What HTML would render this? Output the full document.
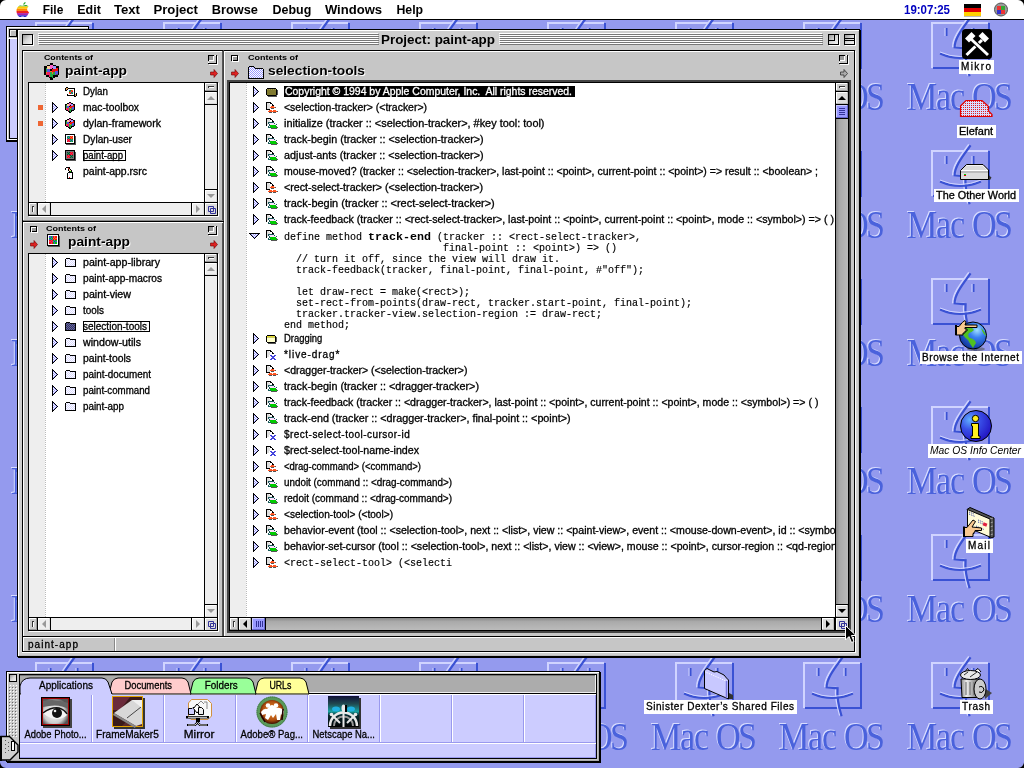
<!DOCTYPE html>
<html><head><meta charset="utf-8"><title>Mac OS</title>
<style>html,body{margin:0;padding:0;width:1024px;height:768px;overflow:hidden;background:#949aee;}
svg{position:absolute;left:0;top:0;display:block;will-change:transform}
text{white-space:pre}</style></head>
<body><svg width="1024" height="768" viewBox="0 0 1024 768">
<defs>
<pattern id="desk" x="0" y="0" width="128" height="128" patternUnits="userSpaceOnUse">
<rect width="128" height="128" fill="#949aee"/>
<g fill="none" stroke-linecap="butt">
<path d="M36 68 V23 H92" stroke="#d0d4ff" stroke-width="2"/>
<path d="M93 23 V68 H37" stroke="#3a52d4" stroke-width="2"/>
<path d="M74 17 C66 28 58 38 58 47 L69 48 C68 58 70 66 73 76" stroke="#d0d4ff" stroke-width="1.6" transform="translate(-1.2,-0.6)"/>
<path d="M74 17 C66 28 58 38 58 47 L69 48 C68 58 70 66 73 76" stroke="#3a52d4" stroke-width="2.2" transform="translate(0.6,0.3)"/>
<path d="M50.5 28 V36 M77.5 28 V36" stroke="#3a52d4" stroke-width="2"/>
<path d="M49 28 V36 M76 28 V36" stroke="#d0d4ff" stroke-width="1"/>
<path d="M44 53.5 Q64 62.5 85 53.5" stroke="#3a52d4" stroke-width="2"/>
<path d="M44 52 Q64 61 85 52" stroke="#d0d4ff" stroke-width="1"/>
</g>
<g font-family="Liberation Serif" font-size="34" lengthAdjust="spacingAndGlyphs">
<g transform="translate(10,109) scale(1,1.19)" fill="#d8dcff"><text x="0" y="0" textLength="58">Mac</text><text x="65" y="0" textLength="41">OS</text></g>
<g transform="translate(11,110) scale(1,1.19)" fill="#4a62dc"><text x="0" y="0" textLength="58">Mac</text><text x="65" y="0" textLength="41">OS</text></g>
</g>
</pattern>
</defs>
<rect x="0" y="0" width="1024" height="768" fill="url(#desk)"/>
<g transform="translate(962,29)"><rect x="0" y="0" width="30" height="30" rx="3.5" fill="#000"/><path d="M20 11 L4.5 26" stroke="#fff" stroke-width="3"/><path d="M27 9.5 L20.5 3 L16.5 7 L23 13.5 Z" fill="#fff"/><path d="M9 10 L26 26" stroke="#000" stroke-width="5"/><path d="M9 10 L26 26" stroke="#fff" stroke-width="3"/><path d="M3 9.5 L9.5 3 L13.5 7 L7 13.5 Z" fill="#fff"/></g>
<rect x="959" y="60" width="35" height="14" fill="#ffffff"/>
<text x="961" y="70" font-family="Liberation Sans" font-size="10" font-weight="normal" fill="#000" textLength="30" lengthAdjust="spacing" stroke="#000" stroke-width="0.3">Mikro</text>
<defs><pattern id="reddot" width="2" height="2" patternUnits="userSpaceOnUse"><rect width="2" height="2" fill="#d8dcff"/><rect x="1" y="1" width="1" height="1" fill="#e02020"/></pattern></defs>
<path d="M960.5 106 L966 100.5 H982 L988.5 106.5 V111 L992 114.5 V116.5 H960.5 Z" fill="url(#reddot)" stroke="#e00000" stroke-width="1.2"/>
<rect x="957" y="125" width="39" height="13" fill="#ffffff"/>
<text x="959" y="135" font-family="Liberation Sans" font-size="10" font-weight="normal" fill="#000" textLength="34" lengthAdjust="spacingAndGlyphs" stroke="#000" stroke-width="0.3">Elefant</text>
<g transform="translate(960,164)"><path d="M28.5 11 L31.5 13.5 L30 16 H28.5 Z" fill="#333"/><path d="M0.5 6.5 L6.5 0.5 H23 L28.5 6 V15.5 H0.5 Z" fill="#dcdcdc" stroke="#000" stroke-width="1"/><path d="M1 6.5 H28" stroke="#fff" stroke-width="1"/><path d="M1 8 H28" stroke="#999" stroke-width="1"/><path d="M6.5 1.5 H22.5 L27 6" stroke="#f4f4f4" fill="none"/><rect x="4" y="10" width="2" height="1" fill="#0c0"/><rect x="4" y="11" width="2" height="1" fill="#d00"/></g>
<rect x="934" y="189" width="85" height="13" fill="#ffffff"/>
<text x="936" y="199" font-family="Liberation Sans" font-size="10" font-weight="normal" fill="#000" textLength="80" lengthAdjust="spacingAndGlyphs" stroke="#000" stroke-width="0.3">The Other World</text>
<defs><radialGradient id="globe" cx="0.65" cy="0.3" r="0.8"><stop offset="0" stop-color="#a0e0ff"/><stop offset="0.35" stop-color="#3a80f0"/><stop offset="1" stop-color="#0a2a90"/></radialGradient><radialGradient id="infog" cx="0.3" cy="0.3" r="0.8"><stop offset="0" stop-color="#60b0ff"/><stop offset="0.4" stop-color="#3a50e8"/><stop offset="1" stop-color="#2010c0"/></radialGradient></defs>
<g transform="translate(955,320)"><ellipse cx="21" cy="29" rx="9" ry="2" fill="#555" opacity="0.6"/><circle cx="18" cy="15.5" r="13.5" fill="url(#globe)" stroke="#000" stroke-width="1"/><path d="M12 6 Q17 7 19 10 Q16 13 14 13 Q12 16 15 18 Q20 19 21 23 Q19 26 18 28 Q15 24 13 20 Q9 17 7 13 Q8 8 12 6 Z M26 8 Q30 11 31 16 Q28 14 26 8 Z" fill="#50c020"/><path d="M0.5 6.5 H4 Q8 1 10 0.5 L11 2 L10 5 H22 V7.5 H10 V9 H12 V11 H10 V13 H8 V15 H0.5 Z" fill="#f8c890" stroke="#000" stroke-width="1"/><rect x="0" y="5" width="2" height="10" fill="#000"/></g>
<rect x="920" y="351" width="102" height="13" fill="#ffffff"/>
<text x="922" y="361" font-family="Liberation Sans" font-size="10" font-weight="normal" fill="#000" textLength="97" lengthAdjust="spacing" stroke="#000" stroke-width="0.3">Browse the Internet</text>
<g transform="translate(960,411)"><circle cx="16" cy="15" r="15.5" fill="url(#infog)" stroke="#000" stroke-width="1"/><circle cx="15.5" cy="7.5" r="3.2" fill="#ffee20" stroke="#000" stroke-width="1"/><path d="M11.5 12.5 H18.5 V25 H20 V27.5 H11 V25 H12.5 V15 H11.5 Z" fill="#ffee20" stroke="#000" stroke-width="1"/></g>
<rect x="928" y="444" width="96" height="14" fill="#ffffff"/>
<text x="930" y="454" font-family="Liberation Sans" font-size="10" font-weight="normal" fill="#000" textLength="91" lengthAdjust="spacingAndGlyphs" font-style="italic">Mac OS Info Center</text>
<g transform="translate(963,507)"><path d="M4 2.5 L7 0.5 L31 11 V30 L27 31 Z" fill="#555" stroke="#000" stroke-width="1"/><path d="M27 12 L30 11 M27 16 L30 15 M27 20 L30 19 M27 24 L30 23 M27 28 L30 27" stroke="#aaa" stroke-width="0.8"/><path d="M4.5 2.5 L27 12 V30 L4.5 20.5 Z" fill="#fffbd8" stroke="#000" stroke-width="1"/><path d="M6 5 L11 7 M6 7 L12 9.5 M15 13 L20 15 M15 15 L20 17 M13 19 L21 22.5" stroke="#3040a0" stroke-width="1" stroke-dasharray="1 1"/><rect x="20" y="16" width="4" height="3" fill="#e02040" transform="rotate(22 22 17.5)"/><path d="M0.5 20.5 H4 L10 13 L12.5 14.5 L9 20 L18.5 21 V23.5 H12 V25 H11 V26.5 H10 V29.5 H0.5 Z" fill="#f8c890" stroke="#000" stroke-width="1"/><rect x="0" y="19.5" width="2" height="10.5" fill="#000"/></g>
<rect x="966" y="539" width="27" height="14" fill="#ffffff"/>
<text x="968" y="549" font-family="Liberation Sans" font-size="10" font-weight="normal" fill="#000" textLength="22" lengthAdjust="spacing" stroke="#000" stroke-width="0.3">Mail</text>
<g transform="translate(704,668)"><path d="M25 25 L29 27 L29 31 L24 31 Z" fill="#333"/><path d="M0.5 2.5 L3 0.5 L10 4 L13 3.5 L20 7 L22.5 10 L24.5 12 V31 L0.5 20.5 Z" fill="#c8c8ff" stroke="#000" stroke-width="1"/><path d="M1.5 4 L22 13" stroke="#fff" stroke-width="1" stroke-dasharray="1 1"/><path d="M22.5 13 V30" stroke="#7777dd" stroke-width="1.5"/></g>
<rect x="644" y="700" width="153" height="14" fill="#ffffff"/>
<text x="646" y="710" font-family="Liberation Sans" font-size="10" font-weight="normal" fill="#000" textLength="148" lengthAdjust="spacing" stroke="#000" stroke-width="0.3">Sinister Dexter’s Shared Files</text>
<defs><linearGradient id="can" x1="0" x2="1"><stop offset="0" stop-color="#888"/><stop offset="0.3" stop-color="#eee"/><stop offset="0.6" stop-color="#aaa"/><stop offset="1" stop-color="#666"/></linearGradient></defs>
<g transform="translate(960,668)"><path d="M24 20 L32 25 L25 31 Z" fill="#444"/><path d="M5 4 L7.5 0.5 L10 4 M12 5 L18 0.5 L21 4" fill="#fff" stroke="#000" stroke-width="1"/><path d="M1 11 L2 29.5 H18 L20 11 Z" fill="url(#can)" stroke="#000" stroke-width="1"/><ellipse cx="10.5" cy="7" rx="10" ry="4.5" fill="#e8e8e8" stroke="#000" stroke-width="1"/><path d="M4 7 L8 4 M10 9 L17 4" stroke="#000" stroke-width="0.8"/><path d="M6 14 V27 M10 14 V27 M14 14 V27" stroke="#666" stroke-width="1"/><ellipse cx="20" cy="21" rx="6" ry="10" fill="#ccc" stroke="#000" stroke-width="1"/><path d="M19 19 Q23 17 24 22 Q22 26 19 24" fill="none" stroke="#000" stroke-width="1"/></g>
<rect x="960" y="700" width="33" height="14" fill="#ffffff"/>
<text x="962" y="710" font-family="Liberation Sans" font-size="10" font-weight="normal" fill="#000" textLength="28" lengthAdjust="spacing" stroke="#000" stroke-width="0.3">Trash</text>
<rect x="6" y="26" width="83" height="116" fill="#000"/>
<rect x="7" y="27" width="81" height="114" fill="#c6c6c6"/>
<rect x="7" y="27" width="81" height="1" fill="#fff"/>
<rect x="7" y="27" width="1" height="113" fill="#fff"/>
<rect x="9" y="29" width="8" height="1" fill="#000"/>
<rect x="9" y="36" width="8" height="1" fill="#000"/>
<rect x="9" y="29" width="1" height="8" fill="#000"/>
<rect x="16" y="29" width="1" height="8" fill="#000"/>
<rect x="10" y="30" width="6" height="6" fill="#bbb"/>
<rect x="10" y="30" width="6" height="1" fill="#eee"/>
<rect x="10" y="30" width="1" height="6" fill="#eee"/>
<rect x="8" y="38" width="9" height="1" fill="#fff"/>
<rect x="9" y="39" width="1" height="100" fill="#000"/>
<rect x="10" y="39" width="7" height="99" fill="#ccccff"/>
<rect x="9" y="138" width="8" height="1" fill="#000"/>
<rect x="8" y="139" width="9" height="1" fill="#fff"/>
<rect x="7" y="140" width="11" height="1" fill="#000"/>
<rect x="8" y="141" width="11" height="1" fill="#000"/>
<rect x="17" y="29" width="843" height="628" fill="#000"/>
<rect x="860" y="30" width="1" height="628" fill="#000"/>
<rect x="18" y="657" width="843" height="1" fill="#000"/>
<rect x="18" y="30" width="841" height="626" fill="#cecece"/>
<rect x="23" y="51" width="831" height="600" fill="#c6c6c6"/>
<rect x="18" y="30" width="841" height="1" fill="#fff"/>
<rect x="18" y="30" width="1" height="626" fill="#fff"/>
<rect x="858" y="31" width="1" height="625" fill="#bbbbbb"/>
<rect x="19" y="655" width="840" height="1" fill="#bbbbbb"/>
<defs><linearGradient id="gbox" x1="0" y1="0" x2="1" y2="1"><stop offset="0" stop-color="#999"/><stop offset="0.5" stop-color="#d8d8d8"/><stop offset="1" stop-color="#f4f4f4"/></linearGradient></defs>
<rect x="22" y="34" width="11" height="1" fill="#000"/>
<rect x="22" y="44" width="11" height="1" fill="#000"/>
<rect x="22" y="34" width="1" height="11" fill="#000"/>
<rect x="32" y="34" width="1" height="11" fill="#000"/>
<rect x="23" y="35" width="9" height="9" fill="url(#gbox)"/>
<rect x="23" y="45" width="11" height="1" fill="#fff"/>
<rect x="33" y="35" width="1" height="11" fill="#fff"/>
<rect x="38" y="33" width="340" height="1" fill="#fff"/>
<rect x="39" y="34" width="340" height="1" fill="#777"/>
<rect x="38" y="35" width="340" height="1" fill="#fff"/>
<rect x="39" y="36" width="340" height="1" fill="#777"/>
<rect x="38" y="37" width="340" height="1" fill="#fff"/>
<rect x="39" y="38" width="340" height="1" fill="#777"/>
<rect x="38" y="39" width="340" height="1" fill="#fff"/>
<rect x="39" y="40" width="340" height="1" fill="#777"/>
<rect x="38" y="41" width="340" height="1" fill="#fff"/>
<rect x="39" y="42" width="340" height="1" fill="#777"/>
<rect x="38" y="43" width="340" height="1" fill="#fff"/>
<rect x="39" y="44" width="340" height="1" fill="#777"/>
<rect x="499" y="33" width="323" height="1" fill="#fff"/>
<rect x="500" y="34" width="323" height="1" fill="#777"/>
<rect x="499" y="35" width="323" height="1" fill="#fff"/>
<rect x="500" y="36" width="323" height="1" fill="#777"/>
<rect x="499" y="37" width="323" height="1" fill="#fff"/>
<rect x="500" y="38" width="323" height="1" fill="#777"/>
<rect x="499" y="39" width="323" height="1" fill="#fff"/>
<rect x="500" y="40" width="323" height="1" fill="#777"/>
<rect x="499" y="41" width="323" height="1" fill="#fff"/>
<rect x="500" y="42" width="323" height="1" fill="#777"/>
<rect x="499" y="43" width="323" height="1" fill="#fff"/>
<rect x="500" y="44" width="323" height="1" fill="#777"/>
<text x="381" y="44" font-family="Liberation Sans" font-size="12" font-weight="bold" fill="#000" textLength="114" lengthAdjust="spacingAndGlyphs">Project: paint-app</text>
<rect x="828" y="34" width="11" height="1" fill="#000"/>
<rect x="828" y="44" width="11" height="1" fill="#000"/>
<rect x="828" y="34" width="1" height="11" fill="#000"/>
<rect x="838" y="34" width="1" height="11" fill="#000"/>
<rect x="829" y="35" width="9" height="9" fill="url(#gbox)"/>
<rect x="829" y="45" width="11" height="1" fill="#fff"/>
<rect x="839" y="35" width="1" height="11" fill="#fff"/>
<rect x="828" y="34" width="7" height="1" fill="#000"/>
<rect x="828" y="40" width="7" height="1" fill="#000"/>
<rect x="828" y="34" width="1" height="7" fill="#000"/>
<rect x="834" y="34" width="1" height="7" fill="#000"/>
<rect x="844" y="34" width="11" height="1" fill="#000"/>
<rect x="844" y="44" width="11" height="1" fill="#000"/>
<rect x="844" y="34" width="1" height="11" fill="#000"/>
<rect x="854" y="34" width="1" height="11" fill="#000"/>
<rect x="845" y="35" width="9" height="9" fill="url(#gbox)"/>
<rect x="845" y="45" width="11" height="1" fill="#fff"/>
<rect x="855" y="35" width="1" height="11" fill="#fff"/>
<rect x="845" y="38" width="9" height="1" fill="#000"/>
<rect x="845" y="40" width="9" height="1" fill="#000"/>
<rect x="22" y="50" width="833" height="1" fill="#000"/>
<rect x="22" y="50" width="1" height="602" fill="#000"/>
<rect x="23" y="51" width="831" height="1" fill="#fff"/>
<rect x="23" y="51" width="1" height="585" fill="#fff"/>
<rect x="854" y="50" width="1" height="602" fill="#000"/>
<rect x="855" y="51" width="1" height="602" fill="#fff"/>
<rect x="222" y="51" width="1" height="585" fill="#555"/>
<rect x="223" y="50" width="1" height="586" fill="#444"/>
<rect x="224" y="51" width="1" height="585" fill="#fff"/>
<rect x="23" y="220" width="200" height="1" fill="#888"/>
<rect x="22" y="221" width="202" height="1" fill="#000"/>
<rect x="23" y="222" width="200" height="1" fill="#fff"/>
<rect x="22" y="636" width="833" height="1" fill="#000"/>
<rect x="23" y="637" width="831" height="1" fill="#fff"/>
<rect x="22" y="651" width="833" height="1" fill="#000"/>
<rect x="22" y="652" width="834" height="1" fill="#fff"/>
<rect x="23" y="637" width="1" height="14" fill="#fff"/>
<rect x="114" y="638" width="1" height="13" fill="#888"/>
<rect x="115" y="638" width="1" height="13" fill="#fff"/>
<text x="28" y="648" font-family="Liberation Sans" font-size="10" font-weight="normal" fill="#000" textLength="50" lengthAdjust="spacing" stroke="#000" stroke-width="0.3">paint-app</text>
<rect x="28" y="82" width="190" height="1" fill="#000"/>
<rect x="28" y="215" width="190" height="1" fill="#000"/>
<rect x="28" y="82" width="1" height="134" fill="#000"/>
<rect x="217" y="82" width="1" height="134" fill="#000"/>
<rect x="29" y="83" width="175" height="119" fill="#fff"/>
<rect x="29" y="83" width="16" height="119" fill="#eeeeee"/>
<line x1="45.5" y1="83" x2="45.5" y2="202" stroke="#bbb" stroke-width="1" stroke-dasharray="1 1"/>
<rect x="204" y="82" width="1" height="134" fill="#000"/>
<rect x="28" y="202" width="190" height="1" fill="#000"/>
<rect x="205" y="83" width="12" height="8" fill="#cccccc"/>
<rect x="205" y="83" width="12" height="1" fill="#fff"/>
<rect x="205" y="83" width="1" height="8" fill="#fff"/>
<rect x="205" y="90" width="12" height="1" fill="#999"/>
<rect x="216" y="83" width="1" height="8" fill="#999"/>
<rect x="208" y="86" width="6" height="1" fill="#333"/>
<rect x="208" y="86" width="1" height="2" fill="#333"/>
<rect x="209" y="87" width="5" height="1" fill="#fff"/>
<rect x="205" y="91" width="12" height="1" fill="#000"/>
<rect x="205" y="92" width="12" height="12" fill="#eeeeee"/>
<rect x="205" y="92" width="12" height="1" fill="#fff"/>
<rect x="205" y="92" width="1" height="12" fill="#fff"/>
<rect x="205" y="103" width="12" height="1" fill="#ddd"/>
<rect x="216" y="92" width="1" height="12" fill="#ddd"/>
<path d="M207.0 100.0 L215.0 100.0 L211.0 96.0 Z" fill="#999"/>
<rect x="205" y="104" width="12" height="1" fill="#000"/>
<rect x="205" y="105" width="12" height="84" fill="#eeeeee"/>
<rect x="205" y="189" width="12" height="1" fill="#000"/>
<rect x="205" y="190" width="12" height="12" fill="#eeeeee"/>
<rect x="205" y="190" width="12" height="1" fill="#fff"/>
<rect x="205" y="190" width="1" height="12" fill="#fff"/>
<rect x="205" y="201" width="12" height="1" fill="#ddd"/>
<rect x="216" y="190" width="1" height="12" fill="#ddd"/>
<path d="M207.0 194.0 L215.0 194.0 L211.0 198.0 Z" fill="#999"/>
<rect x="29" y="203" width="8" height="12" fill="#cccccc"/>
<rect x="29" y="203" width="8" height="1" fill="#fff"/>
<rect x="29" y="203" width="1" height="12" fill="#fff"/>
<rect x="29" y="214" width="8" height="1" fill="#999"/>
<rect x="36" y="203" width="1" height="12" fill="#999"/>
<rect x="32" y="206" width="1" height="6" fill="#333"/>
<rect x="32" y="206" width="2" height="1" fill="#333"/>
<rect x="33" y="207" width="1" height="5" fill="#fff"/>
<rect x="37" y="202" width="1" height="14" fill="#000"/>
<rect x="38" y="203" width="12" height="12" fill="#eeeeee"/>
<rect x="38" y="203" width="12" height="1" fill="#fff"/>
<rect x="38" y="203" width="1" height="12" fill="#fff"/>
<rect x="38" y="214" width="12" height="1" fill="#ddd"/>
<rect x="49" y="203" width="1" height="12" fill="#ddd"/>
<path d="M46.0 205.0 L46.0 213.0 L42.0 209.0 Z" fill="#999"/>
<rect x="50" y="202" width="1" height="14" fill="#000"/>
<rect x="51" y="203" width="140" height="12" fill="#eeeeee"/>
<rect x="191" y="202" width="1" height="14" fill="#000"/>
<rect x="192" y="203" width="12" height="12" fill="#eeeeee"/>
<rect x="192" y="203" width="12" height="1" fill="#fff"/>
<rect x="192" y="203" width="1" height="12" fill="#fff"/>
<rect x="192" y="214" width="12" height="1" fill="#ddd"/>
<rect x="203" y="203" width="1" height="12" fill="#ddd"/>
<path d="M196.0 205.0 L196.0 213.0 L200.0 209.0 Z" fill="#999"/>
<rect x="205" y="203" width="12" height="12" fill="#dddddd"/>
<rect x="205" y="203" width="12" height="1" fill="#fff"/>
<rect x="205" y="203" width="1" height="12" fill="#fff"/>
<path d="M208.5 206.5 h5 v5 h-5 z M210.5 208.5 h5 v5 h-5 z" fill="none" stroke="#333399" stroke-width="1"/>
<rect x="29" y="216" width="190" height="1" fill="#fff"/>
<rect x="218" y="83" width="1" height="134" fill="#fff"/>
<rect x="28" y="253" width="190" height="1" fill="#000"/>
<rect x="28" y="630" width="190" height="1" fill="#000"/>
<rect x="28" y="253" width="1" height="378" fill="#000"/>
<rect x="217" y="253" width="1" height="378" fill="#000"/>
<rect x="29" y="254" width="175" height="363" fill="#fff"/>
<rect x="29" y="254" width="16" height="363" fill="#eeeeee"/>
<line x1="45.5" y1="254" x2="45.5" y2="617" stroke="#bbb" stroke-width="1" stroke-dasharray="1 1"/>
<rect x="204" y="253" width="1" height="378" fill="#000"/>
<rect x="28" y="617" width="190" height="1" fill="#000"/>
<rect x="205" y="254" width="12" height="8" fill="#cccccc"/>
<rect x="205" y="254" width="12" height="1" fill="#fff"/>
<rect x="205" y="254" width="1" height="8" fill="#fff"/>
<rect x="205" y="261" width="12" height="1" fill="#999"/>
<rect x="216" y="254" width="1" height="8" fill="#999"/>
<rect x="208" y="257" width="6" height="1" fill="#333"/>
<rect x="208" y="257" width="1" height="2" fill="#333"/>
<rect x="209" y="258" width="5" height="1" fill="#fff"/>
<rect x="205" y="262" width="12" height="1" fill="#000"/>
<rect x="205" y="263" width="12" height="12" fill="#eeeeee"/>
<rect x="205" y="263" width="12" height="1" fill="#fff"/>
<rect x="205" y="263" width="1" height="12" fill="#fff"/>
<rect x="205" y="274" width="12" height="1" fill="#ddd"/>
<rect x="216" y="263" width="1" height="12" fill="#ddd"/>
<path d="M207.0 271.0 L215.0 271.0 L211.0 267.0 Z" fill="#999"/>
<rect x="205" y="275" width="12" height="1" fill="#000"/>
<rect x="205" y="276" width="12" height="328" fill="#eeeeee"/>
<rect x="205" y="604" width="12" height="1" fill="#000"/>
<rect x="205" y="605" width="12" height="12" fill="#eeeeee"/>
<rect x="205" y="605" width="12" height="1" fill="#fff"/>
<rect x="205" y="605" width="1" height="12" fill="#fff"/>
<rect x="205" y="616" width="12" height="1" fill="#ddd"/>
<rect x="216" y="605" width="1" height="12" fill="#ddd"/>
<path d="M207.0 609.0 L215.0 609.0 L211.0 613.0 Z" fill="#999"/>
<rect x="29" y="618" width="8" height="12" fill="#cccccc"/>
<rect x="29" y="618" width="8" height="1" fill="#fff"/>
<rect x="29" y="618" width="1" height="12" fill="#fff"/>
<rect x="29" y="629" width="8" height="1" fill="#999"/>
<rect x="36" y="618" width="1" height="12" fill="#999"/>
<rect x="32" y="621" width="1" height="6" fill="#333"/>
<rect x="32" y="621" width="2" height="1" fill="#333"/>
<rect x="33" y="622" width="1" height="5" fill="#fff"/>
<rect x="37" y="617" width="1" height="14" fill="#000"/>
<rect x="38" y="618" width="12" height="12" fill="#eeeeee"/>
<rect x="38" y="618" width="12" height="1" fill="#fff"/>
<rect x="38" y="618" width="1" height="12" fill="#fff"/>
<rect x="38" y="629" width="12" height="1" fill="#ddd"/>
<rect x="49" y="618" width="1" height="12" fill="#ddd"/>
<path d="M46.0 620.0 L46.0 628.0 L42.0 624.0 Z" fill="#999"/>
<rect x="50" y="617" width="1" height="14" fill="#000"/>
<rect x="51" y="618" width="140" height="12" fill="#eeeeee"/>
<rect x="191" y="617" width="1" height="14" fill="#000"/>
<rect x="192" y="618" width="12" height="12" fill="#eeeeee"/>
<rect x="192" y="618" width="12" height="1" fill="#fff"/>
<rect x="192" y="618" width="1" height="12" fill="#fff"/>
<rect x="192" y="629" width="12" height="1" fill="#ddd"/>
<rect x="203" y="618" width="1" height="12" fill="#ddd"/>
<path d="M196.0 620.0 L196.0 628.0 L200.0 624.0 Z" fill="#999"/>
<rect x="205" y="618" width="12" height="12" fill="#dddddd"/>
<rect x="205" y="618" width="12" height="1" fill="#fff"/>
<rect x="205" y="618" width="1" height="12" fill="#fff"/>
<path d="M208.5 621.5 h5 v5 h-5 z M210.5 623.5 h5 v5 h-5 z" fill="none" stroke="#333399" stroke-width="1"/>
<rect x="29" y="631" width="190" height="1" fill="#fff"/>
<rect x="218" y="254" width="1" height="378" fill="#fff"/>
<rect x="227" y="80" width="624" height="1" fill="#444444"/>
<rect x="227" y="632" width="624" height="1" fill="#444444"/>
<rect x="227" y="80" width="1" height="553" fill="#444444"/>
<rect x="850" y="80" width="1" height="553" fill="#444444"/>
<rect x="228" y="81" width="622" height="1" fill="#444444"/>
<rect x="228" y="631" width="622" height="1" fill="#444444"/>
<rect x="228" y="81" width="1" height="551" fill="#444444"/>
<rect x="849" y="81" width="1" height="551" fill="#444444"/>
<rect x="229" y="82" width="620" height="1" fill="#000"/>
<rect x="229" y="630" width="620" height="1" fill="#000"/>
<rect x="229" y="82" width="1" height="549" fill="#000"/>
<rect x="848" y="82" width="1" height="549" fill="#000"/>
<rect x="230" y="83" width="605" height="534" fill="#fff"/>
<rect x="230" y="83" width="16" height="534" fill="#eeeeee"/>
<line x1="246.5" y1="83" x2="246.5" y2="617" stroke="#bbb" stroke-width="1" stroke-dasharray="1 1"/>
<rect x="835" y="82" width="1" height="549" fill="#000"/>
<rect x="229" y="617" width="620" height="1" fill="#000"/>
<rect x="836" y="83" width="12" height="8" fill="#cccccc"/>
<rect x="836" y="83" width="12" height="1" fill="#fff"/>
<rect x="836" y="83" width="1" height="8" fill="#fff"/>
<rect x="836" y="90" width="12" height="1" fill="#999"/>
<rect x="847" y="83" width="1" height="8" fill="#999"/>
<rect x="839" y="86" width="6" height="1" fill="#333"/>
<rect x="839" y="86" width="1" height="2" fill="#333"/>
<rect x="840" y="87" width="5" height="1" fill="#fff"/>
<rect x="836" y="91" width="12" height="1" fill="#000"/>
<rect x="836" y="92" width="12" height="12" fill="#dddddd"/>
<rect x="836" y="92" width="12" height="1" fill="#fff"/>
<rect x="836" y="92" width="1" height="12" fill="#fff"/>
<rect x="836" y="103" width="12" height="1" fill="#bbb"/>
<rect x="847" y="92" width="1" height="12" fill="#bbb"/>
<path d="M838.0 100.0 L846.0 100.0 L842.0 96.0 Z" fill="#000"/>
<rect x="836" y="104" width="12" height="1" fill="#000"/>
<rect x="836" y="105" width="12" height="13" fill="#9999ff"/>
<rect x="836" y="105" width="12" height="1" fill="#ccccff"/>
<rect x="836" y="105" width="1" height="13" fill="#ccccff"/>
<rect x="836" y="117" width="12" height="1" fill="#6666cc"/>
<rect x="847" y="105" width="1" height="13" fill="#6666cc"/>
<rect x="839" y="108" width="6" height="1" fill="#333399"/>
<rect x="839" y="110" width="6" height="1" fill="#333399"/>
<rect x="839" y="112" width="6" height="1" fill="#333399"/>
<rect x="839" y="114" width="6" height="1" fill="#333399"/>
<rect x="836" y="118" width="12" height="1" fill="#000"/>
<defs><linearGradient id="trv" x1="0" x2="1"><stop offset="0" stop-color="#888"/><stop offset="0.3" stop-color="#aaa"/><stop offset="1" stop-color="#bbb"/></linearGradient><linearGradient id="trh" x1="0" x2="0" y1="0" y2="1"><stop offset="0" stop-color="#888"/><stop offset="0.3" stop-color="#aaa"/><stop offset="1" stop-color="#bbb"/></linearGradient></defs>
<rect x="836" y="119" width="12" height="485" fill="url(#trv)"/>
<rect x="836" y="604" width="12" height="1" fill="#000"/>
<rect x="836" y="605" width="12" height="12" fill="#dddddd"/>
<rect x="836" y="605" width="12" height="1" fill="#fff"/>
<rect x="836" y="605" width="1" height="12" fill="#fff"/>
<rect x="836" y="616" width="12" height="1" fill="#bbb"/>
<rect x="847" y="605" width="1" height="12" fill="#bbb"/>
<path d="M838.0 609.0 L846.0 609.0 L842.0 613.0 Z" fill="#000"/>
<rect x="230" y="618" width="8" height="12" fill="#cccccc"/>
<rect x="230" y="618" width="8" height="1" fill="#fff"/>
<rect x="230" y="618" width="1" height="12" fill="#fff"/>
<rect x="230" y="629" width="8" height="1" fill="#999"/>
<rect x="237" y="618" width="1" height="12" fill="#999"/>
<rect x="233" y="621" width="1" height="6" fill="#333"/>
<rect x="233" y="621" width="2" height="1" fill="#333"/>
<rect x="234" y="622" width="1" height="5" fill="#fff"/>
<rect x="238" y="617" width="1" height="14" fill="#000"/>
<rect x="239" y="618" width="12" height="12" fill="#dddddd"/>
<rect x="239" y="618" width="12" height="1" fill="#fff"/>
<rect x="239" y="618" width="1" height="12" fill="#fff"/>
<rect x="239" y="629" width="12" height="1" fill="#bbb"/>
<rect x="250" y="618" width="1" height="12" fill="#bbb"/>
<path d="M247.0 620.0 L247.0 628.0 L243.0 624.0 Z" fill="#000"/>
<rect x="251" y="617" width="1" height="14" fill="#000"/>
<rect x="252" y="618" width="13" height="12" fill="#9999ff"/>
<rect x="252" y="618" width="13" height="1" fill="#ccccff"/>
<rect x="252" y="618" width="1" height="12" fill="#ccccff"/>
<rect x="252" y="629" width="13" height="1" fill="#6666cc"/>
<rect x="264" y="618" width="1" height="12" fill="#6666cc"/>
<rect x="256" y="621" width="1" height="6" fill="#333399"/>
<rect x="258" y="621" width="1" height="6" fill="#333399"/>
<rect x="260" y="621" width="1" height="6" fill="#333399"/>
<rect x="262" y="621" width="1" height="6" fill="#333399"/>
<rect x="265" y="617" width="1" height="14" fill="#000"/>
<rect x="266" y="618" width="555" height="12" fill="url(#trh)"/>
<rect x="821" y="617" width="1" height="14" fill="#000"/>
<rect x="822" y="618" width="12" height="12" fill="#dddddd"/>
<rect x="822" y="618" width="12" height="1" fill="#fff"/>
<rect x="822" y="618" width="1" height="12" fill="#fff"/>
<rect x="822" y="629" width="12" height="1" fill="#bbb"/>
<rect x="833" y="618" width="1" height="12" fill="#bbb"/>
<path d="M826.0 620.0 L826.0 628.0 L830.0 624.0 Z" fill="#000"/>
<rect x="834" y="617" width="1" height="14" fill="#000"/>
<rect x="836" y="618" width="12" height="12" fill="#dddddd"/>
<rect x="836" y="618" width="12" height="1" fill="#fff"/>
<rect x="836" y="618" width="1" height="12" fill="#fff"/>
<path d="M839.5 621.5 h5 v5 h-5 z M841.5 623.5 h5 v5 h-5 z" fill="none" stroke="#333399" stroke-width="1"/>
<defs><g id="tri" shape-rendering="crispEdges"><rect x="0" y="0" width="1" height="1" fill="#000"/><rect x="0" y="1" width="2" height="1" fill="#000"/><rect x="0" y="2" width="1" height="1" fill="#000"/><rect x="1" y="2" width="1" height="1" fill="#9999ff"/><rect x="2" y="2" width="1" height="1" fill="#000"/><rect x="0" y="3" width="1" height="1" fill="#000"/><rect x="1" y="3" width="1" height="1" fill="#ffffff"/><rect x="2" y="3" width="1" height="1" fill="#9999ff"/><rect x="3" y="3" width="1" height="1" fill="#000"/><rect x="0" y="4" width="1" height="1" fill="#000"/><rect x="1" y="4" width="1" height="1" fill="#9999ff"/><rect x="2" y="4" width="1" height="1" fill="#ffffff"/><rect x="3" y="4" width="1" height="1" fill="#9999ff"/><rect x="4" y="4" width="1" height="1" fill="#000"/><rect x="0" y="5" width="1" height="1" fill="#000"/><rect x="1" y="5" width="1" height="1" fill="#ffffff"/><rect x="2" y="5" width="1" height="1" fill="#9999ff"/><rect x="3" y="5" width="1" height="1" fill="#ffffff"/><rect x="4" y="5" width="1" height="1" fill="#9999ff"/><rect x="5" y="5" width="1" height="1" fill="#000"/><rect x="0" y="6" width="1" height="1" fill="#000"/><rect x="1" y="6" width="1" height="1" fill="#9999ff"/><rect x="2" y="6" width="1" height="1" fill="#ffffff"/><rect x="3" y="6" width="1" height="1" fill="#9999ff"/><rect x="4" y="6" width="1" height="1" fill="#000"/><rect x="0" y="7" width="1" height="1" fill="#000"/><rect x="1" y="7" width="1" height="1" fill="#ffffff"/><rect x="2" y="7" width="1" height="1" fill="#9999ff"/><rect x="3" y="7" width="1" height="1" fill="#000"/><rect x="0" y="8" width="1" height="1" fill="#000"/><rect x="1" y="8" width="1" height="1" fill="#9999ff"/><rect x="2" y="8" width="1" height="1" fill="#000"/><rect x="0" y="9" width="2" height="1" fill="#000"/><rect x="0" y="10" width="1" height="1" fill="#000"/></g><g id="tridn" shape-rendering="crispEdges"><rect x="0" y="0" width="11" height="1" fill="#000"/><rect x="1" y="1" width="1" height="1" fill="#000"/><rect x="2" y="1" width="1" height="1" fill="#9999ff"/><rect x="3" y="1" width="1" height="1" fill="#ffffff"/><rect x="4" y="1" width="1" height="1" fill="#9999ff"/><rect x="5" y="1" width="1" height="1" fill="#ffffff"/><rect x="6" y="1" width="1" height="1" fill="#9999ff"/><rect x="7" y="1" width="1" height="1" fill="#ffffff"/><rect x="8" y="1" width="1" height="1" fill="#9999ff"/><rect x="9" y="1" width="1" height="1" fill="#000"/><rect x="2" y="2" width="1" height="1" fill="#000"/><rect x="3" y="2" width="1" height="1" fill="#9999ff"/><rect x="4" y="2" width="1" height="1" fill="#ffffff"/><rect x="5" y="2" width="1" height="1" fill="#9999ff"/><rect x="6" y="2" width="1" height="1" fill="#ffffff"/><rect x="7" y="2" width="1" height="1" fill="#9999ff"/><rect x="8" y="2" width="1" height="1" fill="#000"/><rect x="3" y="3" width="1" height="1" fill="#000"/><rect x="4" y="3" width="1" height="1" fill="#9999ff"/><rect x="5" y="3" width="1" height="1" fill="#ffffff"/><rect x="6" y="3" width="1" height="1" fill="#9999ff"/><rect x="7" y="3" width="1" height="1" fill="#000"/><rect x="4" y="4" width="1" height="1" fill="#000"/><rect x="5" y="4" width="1" height="1" fill="#9999ff"/><rect x="6" y="4" width="1" height="1" fill="#000"/><rect x="5" y="5" width="1" height="1" fill="#000"/></g><g id="cls" shape-rendering="crispEdges"><rect x="0" y="0" width="5" height="1" fill="#000"/><rect x="0" y="1" width="1" height="1" fill="#000"/><rect x="1" y="1" width="2" height="1" fill="#dddddd"/><rect x="4" y="1" width="2" height="1" fill="#000"/><rect x="0" y="2" width="1" height="1" fill="#000"/><rect x="1" y="2" width="3" height="1" fill="#dddddd"/><rect x="6" y="2" width="1" height="1" fill="#000"/><rect x="0" y="3" width="1" height="1" fill="#000"/><rect x="1" y="3" width="3" height="1" fill="#dddddd"/><rect x="6" y="3" width="2" height="1" fill="#000"/><rect x="0" y="4" width="1" height="1" fill="#000"/><rect x="1" y="4" width="3" height="1" fill="#dddddd"/><rect x="5" y="4" width="3" height="1" fill="#ff5522"/><rect x="0" y="5" width="1" height="1" fill="#000"/><rect x="1" y="5" width="3" height="1" fill="#dddddd"/><rect x="4" y="5" width="5" height="1" fill="#ff5522"/><rect x="9" y="5" width="1" height="1" fill="#555555"/><rect x="0" y="6" width="1" height="1" fill="#000"/><rect x="1" y="6" width="3" height="1" fill="#dddddd"/><rect x="5" y="6" width="3" height="1" fill="#555555"/><rect x="0" y="7" width="4" height="1" fill="#000"/><rect x="3" y="8" width="3" height="1" fill="#ff5522"/><rect x="7" y="8" width="3" height="1" fill="#ff5522"/><rect x="2" y="9" width="9" height="1" fill="#ff5522"/><rect x="11" y="9" width="1" height="1" fill="#555555"/><rect x="3" y="10" width="3" height="1" fill="#555555"/><rect x="7" y="10" width="3" height="1" fill="#555555"/></g><g id="mth" shape-rendering="crispEdges"><rect x="0" y="0" width="5" height="1" fill="#000"/><rect x="0" y="1" width="1" height="1" fill="#000"/><rect x="1" y="1" width="2" height="1" fill="#dddddd"/><rect x="4" y="1" width="2" height="1" fill="#000"/><rect x="0" y="2" width="1" height="1" fill="#000"/><rect x="1" y="2" width="3" height="1" fill="#dddddd"/><rect x="6" y="2" width="1" height="1" fill="#000"/><rect x="0" y="3" width="1" height="1" fill="#000"/><rect x="1" y="3" width="3" height="1" fill="#dddddd"/><rect x="6" y="3" width="2" height="1" fill="#000"/><rect x="0" y="4" width="1" height="1" fill="#000"/><rect x="1" y="4" width="1" height="1" fill="#dddddd"/><rect x="2" y="4" width="6" height="1" fill="#1a5a5a"/><rect x="0" y="5" width="1" height="1" fill="#000"/><rect x="1" y="5" width="1" height="1" fill="#dddddd"/><rect x="2" y="5" width="1" height="1" fill="#1a5a5a"/><rect x="3" y="5" width="5" height="1" fill="#ffe0ff"/><rect x="8" y="5" width="1" height="1" fill="#1a5a5a"/><rect x="0" y="6" width="1" height="1" fill="#000"/><rect x="1" y="6" width="1" height="1" fill="#dddddd"/><rect x="3" y="6" width="1" height="1" fill="#1a5a5a"/><rect x="4" y="6" width="6" height="1" fill="#ffe0ff"/><rect x="10" y="6" width="1" height="1" fill="#1a5a5a"/><rect x="0" y="7" width="1" height="1" fill="#000"/><rect x="3" y="7" width="1" height="1" fill="#1a5a5a"/><rect x="4" y="7" width="6" height="1" fill="#00cc00"/><rect x="2" y="8" width="1" height="1" fill="#1a5a5a"/><rect x="4" y="8" width="6" height="1" fill="#00cc00"/><rect x="10" y="8" width="1" height="1" fill="#555555"/><rect x="2" y="9" width="3" height="1" fill="#1a5a5a"/><rect x="5" y="9" width="6" height="1" fill="#00cc00"/><rect x="11" y="9" width="1" height="1" fill="#555555"/><rect x="5" y="10" width="6" height="1" fill="#555555"/></g><g id="var" shape-rendering="crispEdges"><rect x="0" y="1" width="5" height="1" fill="#000"/><rect x="0" y="2" width="1" height="1" fill="#000"/><rect x="1" y="2" width="2" height="1" fill="#dddddd"/><rect x="4" y="2" width="2" height="1" fill="#000"/><rect x="0" y="3" width="1" height="1" fill="#000"/><rect x="1" y="3" width="3" height="1" fill="#dddddd"/><rect x="6" y="3" width="1" height="1" fill="#000"/><rect x="0" y="4" width="1" height="1" fill="#000"/><rect x="1" y="4" width="3" height="1" fill="#dddddd"/><rect x="6" y="4" width="2" height="1" fill="#000"/><rect x="0" y="5" width="1" height="1" fill="#000"/><rect x="1" y="5" width="3" height="1" fill="#dddddd"/><rect x="0" y="6" width="1" height="1" fill="#000"/><rect x="1" y="6" width="2" height="1" fill="#dddddd"/><rect x="4" y="6" width="2" height="1" fill="#4444dd"/><rect x="8" y="6" width="2" height="1" fill="#4444dd"/><rect x="0" y="7" width="1" height="1" fill="#000"/><rect x="1" y="7" width="2" height="1" fill="#dddddd"/><rect x="5" y="7" width="4" height="1" fill="#4444dd"/><rect x="0" y="8" width="1" height="1" fill="#000"/><rect x="6" y="8" width="2" height="1" fill="#4444dd"/><rect x="5" y="9" width="4" height="1" fill="#4444dd"/><rect x="4" y="10" width="2" height="1" fill="#4444dd"/><rect x="8" y="10" width="2" height="1" fill="#4444dd"/></g><g id="sect" shape-rendering="crispEdges"><rect x="1" y="2" width="8" height="1" fill="#000"/><rect x="0" y="3" width="1" height="1" fill="#000"/><rect x="1" y="3" width="1" height="1" fill="#ffee00"/><rect x="2" y="3" width="1" height="1" fill="#cccc66"/><rect x="3" y="3" width="1" height="1" fill="#ffee00"/><rect x="4" y="3" width="1" height="1" fill="#cccc66"/><rect x="5" y="3" width="1" height="1" fill="#ffee00"/><rect x="6" y="3" width="1" height="1" fill="#cccc66"/><rect x="7" y="3" width="1" height="1" fill="#ffee00"/><rect x="8" y="3" width="1" height="1" fill="#cccc66"/><rect x="9" y="3" width="1" height="1" fill="#000"/><rect x="0" y="4" width="1" height="1" fill="#000"/><rect x="1" y="4" width="8" height="1" fill="#cccc66"/><rect x="9" y="4" width="1" height="1" fill="#000"/><rect x="10" y="4" width="1" height="1" fill="#555555"/><rect x="0" y="5" width="1" height="1" fill="#000"/><rect x="1" y="5" width="8" height="1" fill="#ffffcc"/><rect x="9" y="5" width="1" height="1" fill="#000"/><rect x="10" y="5" width="1" height="1" fill="#555555"/><rect x="0" y="6" width="1" height="1" fill="#000"/><rect x="1" y="6" width="8" height="1" fill="#ffffcc"/><rect x="9" y="6" width="1" height="1" fill="#000"/><rect x="10" y="6" width="1" height="1" fill="#555555"/><rect x="0" y="7" width="1" height="1" fill="#000"/><rect x="1" y="7" width="8" height="1" fill="#ffffcc"/><rect x="9" y="7" width="1" height="1" fill="#000"/><rect x="10" y="7" width="1" height="1" fill="#555555"/><rect x="0" y="8" width="1" height="1" fill="#000"/><rect x="1" y="8" width="8" height="1" fill="#ffffcc"/><rect x="9" y="8" width="1" height="1" fill="#000"/><rect x="10" y="8" width="1" height="1" fill="#555555"/><rect x="1" y="9" width="8" height="1" fill="#000"/><rect x="9" y="9" width="1" height="1" fill="#555555"/><rect x="2" y="10" width="8" height="1" fill="#555555"/></g><g id="lib" shape-rendering="crispEdges"><rect x="1" y="2" width="9" height="1" fill="#000"/><rect x="0" y="3" width="1" height="1" fill="#000"/><rect x="1" y="3" width="1" height="1" fill="#a8a050"/><rect x="2" y="3" width="1" height="1" fill="#807a30"/><rect x="3" y="3" width="1" height="1" fill="#a8a050"/><rect x="4" y="3" width="1" height="1" fill="#807a30"/><rect x="5" y="3" width="1" height="1" fill="#a8a050"/><rect x="6" y="3" width="1" height="1" fill="#807a30"/><rect x="7" y="3" width="1" height="1" fill="#a8a050"/><rect x="8" y="3" width="1" height="1" fill="#807a30"/><rect x="9" y="3" width="1" height="1" fill="#a8a050"/><rect x="10" y="3" width="1" height="1" fill="#000"/><rect x="0" y="4" width="1" height="1" fill="#000"/><rect x="1" y="4" width="9" height="1" fill="#807a30"/><rect x="10" y="4" width="1" height="1" fill="#000"/><rect x="11" y="4" width="1" height="1" fill="#555555"/><rect x="0" y="5" width="1" height="1" fill="#000"/><rect x="1" y="5" width="9" height="1" fill="#807a30"/><rect x="10" y="5" width="1" height="1" fill="#000"/><rect x="11" y="5" width="1" height="1" fill="#555555"/><rect x="0" y="6" width="1" height="1" fill="#000"/><rect x="1" y="6" width="9" height="1" fill="#807a30"/><rect x="10" y="6" width="1" height="1" fill="#000"/><rect x="11" y="6" width="1" height="1" fill="#555555"/><rect x="0" y="7" width="1" height="1" fill="#000"/><rect x="1" y="7" width="9" height="1" fill="#807a30"/><rect x="10" y="7" width="1" height="1" fill="#000"/><rect x="11" y="7" width="1" height="1" fill="#555555"/><rect x="0" y="8" width="1" height="1" fill="#000"/><rect x="1" y="8" width="9" height="1" fill="#807a30"/><rect x="10" y="8" width="1" height="1" fill="#000"/><rect x="11" y="8" width="1" height="1" fill="#555555"/><rect x="1" y="9" width="9" height="1" fill="#000"/><rect x="10" y="9" width="1" height="1" fill="#555555"/><rect x="2" y="10" width="9" height="1" fill="#555555"/></g><g id="fold" shape-rendering="crispEdges"><rect x="1" y="0" width="4" height="1" fill="#000"/><rect x="0" y="1" width="1" height="1" fill="#000"/><rect x="1" y="1" width="1" height="1" fill="#ffffff"/><rect x="2" y="1" width="1" height="1" fill="#d8d8ff"/><rect x="3" y="1" width="1" height="1" fill="#ffffff"/><rect x="4" y="1" width="1" height="1" fill="#d8d8ff"/><rect x="5" y="1" width="6" height="1" fill="#000"/><rect x="0" y="2" width="1" height="1" fill="#000"/><rect x="1" y="2" width="1" height="1" fill="#d8d8ff"/><rect x="2" y="2" width="1" height="1" fill="#ffffff"/><rect x="3" y="2" width="1" height="1" fill="#d8d8ff"/><rect x="4" y="2" width="1" height="1" fill="#ffffff"/><rect x="5" y="2" width="1" height="1" fill="#d8d8ff"/><rect x="6" y="2" width="1" height="1" fill="#ffffff"/><rect x="7" y="2" width="1" height="1" fill="#d8d8ff"/><rect x="8" y="2" width="1" height="1" fill="#ffffff"/><rect x="9" y="2" width="1" height="1" fill="#d8d8ff"/><rect x="10" y="2" width="1" height="1" fill="#000"/><rect x="0" y="3" width="1" height="1" fill="#000"/><rect x="1" y="3" width="1" height="1" fill="#ffffff"/><rect x="2" y="3" width="1" height="1" fill="#d8d8ff"/><rect x="3" y="3" width="1" height="1" fill="#ffffff"/><rect x="4" y="3" width="1" height="1" fill="#d8d8ff"/><rect x="5" y="3" width="1" height="1" fill="#ffffff"/><rect x="6" y="3" width="1" height="1" fill="#d8d8ff"/><rect x="7" y="3" width="1" height="1" fill="#ffffff"/><rect x="8" y="3" width="1" height="1" fill="#d8d8ff"/><rect x="9" y="3" width="1" height="1" fill="#ffffff"/><rect x="10" y="3" width="1" height="1" fill="#000"/><rect x="0" y="4" width="1" height="1" fill="#000"/><rect x="1" y="4" width="1" height="1" fill="#d8d8ff"/><rect x="2" y="4" width="1" height="1" fill="#ffffff"/><rect x="3" y="4" width="1" height="1" fill="#d8d8ff"/><rect x="4" y="4" width="1" height="1" fill="#ffffff"/><rect x="5" y="4" width="1" height="1" fill="#d8d8ff"/><rect x="6" y="4" width="1" height="1" fill="#ffffff"/><rect x="7" y="4" width="1" height="1" fill="#d8d8ff"/><rect x="8" y="4" width="1" height="1" fill="#ffffff"/><rect x="9" y="4" width="1" height="1" fill="#d8d8ff"/><rect x="10" y="4" width="1" height="1" fill="#000"/><rect x="0" y="5" width="1" height="1" fill="#000"/><rect x="1" y="5" width="1" height="1" fill="#ffffff"/><rect x="2" y="5" width="1" height="1" fill="#d8d8ff"/><rect x="3" y="5" width="1" height="1" fill="#ffffff"/><rect x="4" y="5" width="1" height="1" fill="#d8d8ff"/><rect x="5" y="5" width="1" height="1" fill="#ffffff"/><rect x="6" y="5" width="1" height="1" fill="#d8d8ff"/><rect x="7" y="5" width="1" height="1" fill="#ffffff"/><rect x="8" y="5" width="1" height="1" fill="#d8d8ff"/><rect x="9" y="5" width="1" height="1" fill="#ffffff"/><rect x="10" y="5" width="1" height="1" fill="#000"/><rect x="0" y="6" width="1" height="1" fill="#000"/><rect x="1" y="6" width="1" height="1" fill="#d8d8ff"/><rect x="2" y="6" width="1" height="1" fill="#ffffff"/><rect x="3" y="6" width="1" height="1" fill="#d8d8ff"/><rect x="4" y="6" width="1" height="1" fill="#ffffff"/><rect x="5" y="6" width="1" height="1" fill="#d8d8ff"/><rect x="6" y="6" width="1" height="1" fill="#ffffff"/><rect x="7" y="6" width="1" height="1" fill="#d8d8ff"/><rect x="8" y="6" width="1" height="1" fill="#ffffff"/><rect x="9" y="6" width="1" height="1" fill="#d8d8ff"/><rect x="10" y="6" width="1" height="1" fill="#000"/><rect x="0" y="7" width="1" height="1" fill="#000"/><rect x="1" y="7" width="1" height="1" fill="#ffffff"/><rect x="2" y="7" width="1" height="1" fill="#d8d8ff"/><rect x="3" y="7" width="1" height="1" fill="#ffffff"/><rect x="4" y="7" width="1" height="1" fill="#d8d8ff"/><rect x="5" y="7" width="1" height="1" fill="#ffffff"/><rect x="6" y="7" width="1" height="1" fill="#d8d8ff"/><rect x="7" y="7" width="1" height="1" fill="#ffffff"/><rect x="8" y="7" width="1" height="1" fill="#d8d8ff"/><rect x="9" y="7" width="1" height="1" fill="#ffffff"/><rect x="10" y="7" width="1" height="1" fill="#000"/><rect x="0" y="8" width="11" height="1" fill="#000"/></g><g id="foldsel" shape-rendering="crispEdges"><rect x="1" y="0" width="4" height="1" fill="#000"/><rect x="0" y="1" width="1" height="1" fill="#000"/><rect x="1" y="1" width="1" height="1" fill="#333366"/><rect x="2" y="1" width="1" height="1" fill="#666699"/><rect x="3" y="1" width="1" height="1" fill="#333366"/><rect x="4" y="1" width="1" height="1" fill="#666699"/><rect x="5" y="1" width="6" height="1" fill="#000"/><rect x="0" y="2" width="1" height="1" fill="#000"/><rect x="1" y="2" width="1" height="1" fill="#666699"/><rect x="2" y="2" width="1" height="1" fill="#333366"/><rect x="3" y="2" width="1" height="1" fill="#666699"/><rect x="4" y="2" width="1" height="1" fill="#333366"/><rect x="5" y="2" width="1" height="1" fill="#666699"/><rect x="6" y="2" width="1" height="1" fill="#333366"/><rect x="7" y="2" width="1" height="1" fill="#666699"/><rect x="8" y="2" width="1" height="1" fill="#333366"/><rect x="9" y="2" width="1" height="1" fill="#666699"/><rect x="10" y="2" width="1" height="1" fill="#000"/><rect x="0" y="3" width="1" height="1" fill="#000"/><rect x="1" y="3" width="1" height="1" fill="#333366"/><rect x="2" y="3" width="1" height="1" fill="#666699"/><rect x="3" y="3" width="1" height="1" fill="#333366"/><rect x="4" y="3" width="1" height="1" fill="#666699"/><rect x="5" y="3" width="1" height="1" fill="#333366"/><rect x="6" y="3" width="1" height="1" fill="#666699"/><rect x="7" y="3" width="1" height="1" fill="#333366"/><rect x="8" y="3" width="1" height="1" fill="#666699"/><rect x="9" y="3" width="1" height="1" fill="#333366"/><rect x="10" y="3" width="1" height="1" fill="#000"/><rect x="0" y="4" width="1" height="1" fill="#000"/><rect x="1" y="4" width="1" height="1" fill="#666699"/><rect x="2" y="4" width="1" height="1" fill="#333366"/><rect x="3" y="4" width="1" height="1" fill="#666699"/><rect x="4" y="4" width="1" height="1" fill="#333366"/><rect x="5" y="4" width="1" height="1" fill="#666699"/><rect x="6" y="4" width="1" height="1" fill="#333366"/><rect x="7" y="4" width="1" height="1" fill="#666699"/><rect x="8" y="4" width="1" height="1" fill="#333366"/><rect x="9" y="4" width="1" height="1" fill="#666699"/><rect x="10" y="4" width="1" height="1" fill="#000"/><rect x="0" y="5" width="1" height="1" fill="#000"/><rect x="1" y="5" width="1" height="1" fill="#333366"/><rect x="2" y="5" width="1" height="1" fill="#666699"/><rect x="3" y="5" width="1" height="1" fill="#333366"/><rect x="4" y="5" width="1" height="1" fill="#666699"/><rect x="5" y="5" width="1" height="1" fill="#333366"/><rect x="6" y="5" width="1" height="1" fill="#666699"/><rect x="7" y="5" width="1" height="1" fill="#333366"/><rect x="8" y="5" width="1" height="1" fill="#666699"/><rect x="9" y="5" width="1" height="1" fill="#333366"/><rect x="10" y="5" width="1" height="1" fill="#000"/><rect x="0" y="6" width="1" height="1" fill="#000"/><rect x="1" y="6" width="1" height="1" fill="#666699"/><rect x="2" y="6" width="1" height="1" fill="#333366"/><rect x="3" y="6" width="1" height="1" fill="#666699"/><rect x="4" y="6" width="1" height="1" fill="#333366"/><rect x="5" y="6" width="1" height="1" fill="#666699"/><rect x="6" y="6" width="1" height="1" fill="#333366"/><rect x="7" y="6" width="1" height="1" fill="#666699"/><rect x="8" y="6" width="1" height="1" fill="#333366"/><rect x="9" y="6" width="1" height="1" fill="#666699"/><rect x="10" y="6" width="1" height="1" fill="#000"/><rect x="0" y="7" width="1" height="1" fill="#000"/><rect x="1" y="7" width="1" height="1" fill="#333366"/><rect x="2" y="7" width="1" height="1" fill="#666699"/><rect x="3" y="7" width="1" height="1" fill="#333366"/><rect x="4" y="7" width="1" height="1" fill="#666699"/><rect x="5" y="7" width="1" height="1" fill="#333366"/><rect x="6" y="7" width="1" height="1" fill="#666699"/><rect x="7" y="7" width="1" height="1" fill="#333366"/><rect x="8" y="7" width="1" height="1" fill="#666699"/><rect x="9" y="7" width="1" height="1" fill="#333366"/><rect x="10" y="7" width="1" height="1" fill="#000"/><rect x="0" y="8" width="11" height="1" fill="#000"/></g><g id="doccol" shape-rendering="crispEdges"><rect x="0" y="0" width="10" height="1" fill="#000"/><rect x="0" y="1" width="1" height="1" fill="#000"/><rect x="1" y="1" width="8" height="1" fill="#ffffff"/><rect x="9" y="1" width="1" height="1" fill="#000"/><rect x="0" y="2" width="1" height="1" fill="#000"/><rect x="1" y="2" width="1" height="1" fill="#ffffff"/><rect x="2" y="2" width="1" height="1" fill="#4444dd"/><rect x="3" y="2" width="1" height="1" fill="#00cc00"/><rect x="4" y="2" width="1" height="1" fill="#4444dd"/><rect x="5" y="2" width="1" height="1" fill="#ee1111"/><rect x="6" y="2" width="1" height="1" fill="#ff6622"/><rect x="7" y="2" width="1" height="1" fill="#ee1111"/><rect x="8" y="2" width="1" height="1" fill="#ffffff"/><rect x="9" y="2" width="1" height="1" fill="#000"/><rect x="10" y="2" width="1" height="1" fill="#555555"/><rect x="0" y="3" width="1" height="1" fill="#000"/><rect x="1" y="3" width="1" height="1" fill="#ffffff"/><rect x="2" y="3" width="1" height="1" fill="#00cc00"/><rect x="3" y="3" width="1" height="1" fill="#4444dd"/><rect x="4" y="3" width="1" height="1" fill="#00cc00"/><rect x="5" y="3" width="1" height="1" fill="#ff6622"/><rect x="6" y="3" width="1" height="1" fill="#ee1111"/><rect x="7" y="3" width="1" height="1" fill="#ff6622"/><rect x="8" y="3" width="1" height="1" fill="#ffffff"/><rect x="9" y="3" width="1" height="1" fill="#000"/><rect x="10" y="3" width="1" height="1" fill="#555555"/><rect x="0" y="4" width="1" height="1" fill="#000"/><rect x="1" y="4" width="1" height="1" fill="#ffffff"/><rect x="2" y="4" width="1" height="1" fill="#4444dd"/><rect x="3" y="4" width="1" height="1" fill="#00cc00"/><rect x="4" y="4" width="1" height="1" fill="#4444dd"/><rect x="5" y="4" width="1" height="1" fill="#ee1111"/><rect x="6" y="4" width="1" height="1" fill="#ff6622"/><rect x="7" y="4" width="1" height="1" fill="#ee1111"/><rect x="8" y="4" width="1" height="1" fill="#ffffff"/><rect x="9" y="4" width="1" height="1" fill="#000"/><rect x="10" y="4" width="1" height="1" fill="#555555"/><rect x="0" y="5" width="1" height="1" fill="#000"/><rect x="1" y="5" width="1" height="1" fill="#ffffff"/><rect x="2" y="5" width="1" height="1" fill="#ee1111"/><rect x="3" y="5" width="1" height="1" fill="#ee2266"/><rect x="4" y="5" width="1" height="1" fill="#ee1111"/><rect x="5" y="5" width="1" height="1" fill="#00cc00"/><rect x="6" y="5" width="1" height="1" fill="#4444dd"/><rect x="7" y="5" width="1" height="1" fill="#00cc00"/><rect x="8" y="5" width="1" height="1" fill="#ffffff"/><rect x="9" y="5" width="1" height="1" fill="#000"/><rect x="10" y="5" width="1" height="1" fill="#555555"/><rect x="0" y="6" width="1" height="1" fill="#000"/><rect x="1" y="6" width="1" height="1" fill="#ffffff"/><rect x="2" y="6" width="1" height="1" fill="#ee2266"/><rect x="3" y="6" width="1" height="1" fill="#ee1111"/><rect x="4" y="6" width="1" height="1" fill="#ee2266"/><rect x="5" y="6" width="1" height="1" fill="#4444dd"/><rect x="6" y="6" width="1" height="1" fill="#00cc00"/><rect x="7" y="6" width="1" height="1" fill="#4444dd"/><rect x="8" y="6" width="1" height="1" fill="#ffffff"/><rect x="9" y="6" width="1" height="1" fill="#000"/><rect x="10" y="6" width="1" height="1" fill="#555555"/><rect x="0" y="7" width="1" height="1" fill="#000"/><rect x="1" y="7" width="1" height="1" fill="#ffffff"/><rect x="2" y="7" width="1" height="1" fill="#ee1111"/><rect x="3" y="7" width="1" height="1" fill="#ee2266"/><rect x="4" y="7" width="1" height="1" fill="#ee1111"/><rect x="5" y="7" width="1" height="1" fill="#00cc00"/><rect x="6" y="7" width="1" height="1" fill="#4444dd"/><rect x="7" y="7" width="1" height="1" fill="#00cc00"/><rect x="8" y="7" width="1" height="1" fill="#ffffff"/><rect x="9" y="7" width="1" height="1" fill="#000"/><rect x="10" y="7" width="1" height="1" fill="#555555"/><rect x="0" y="8" width="1" height="1" fill="#000"/><rect x="1" y="8" width="8" height="1" fill="#ffffff"/><rect x="9" y="8" width="1" height="1" fill="#000"/><rect x="10" y="8" width="1" height="1" fill="#555555"/><rect x="0" y="9" width="10" height="1" fill="#000"/><rect x="10" y="9" width="1" height="1" fill="#555555"/><rect x="1" y="10" width="10" height="1" fill="#555555"/></g><g id="docdark" shape-rendering="crispEdges"><rect x="0" y="0" width="10" height="1" fill="#000"/><rect x="0" y="1" width="1" height="1" fill="#000"/><rect x="1" y="1" width="8" height="1" fill="#777777"/><rect x="9" y="1" width="1" height="1" fill="#000"/><rect x="0" y="2" width="1" height="1" fill="#000"/><rect x="1" y="2" width="1" height="1" fill="#777777"/><rect x="2" y="2" width="1" height="1" fill="#222244"/><rect x="3" y="2" width="1" height="1" fill="#22aa44"/><rect x="4" y="2" width="1" height="1" fill="#222244"/><rect x="5" y="2" width="1" height="1" fill="#ee1111"/><rect x="6" y="2" width="1" height="1" fill="#ee2266"/><rect x="7" y="2" width="1" height="1" fill="#ee1111"/><rect x="8" y="2" width="1" height="1" fill="#777777"/><rect x="9" y="2" width="1" height="1" fill="#000"/><rect x="10" y="2" width="1" height="1" fill="#555555"/><rect x="0" y="3" width="1" height="1" fill="#000"/><rect x="1" y="3" width="1" height="1" fill="#777777"/><rect x="2" y="3" width="1" height="1" fill="#22aa44"/><rect x="3" y="3" width="1" height="1" fill="#222244"/><rect x="4" y="3" width="1" height="1" fill="#22aa44"/><rect x="5" y="3" width="1" height="1" fill="#ee2266"/><rect x="6" y="3" width="1" height="1" fill="#ee1111"/><rect x="7" y="3" width="1" height="1" fill="#ee2266"/><rect x="8" y="3" width="1" height="1" fill="#777777"/><rect x="9" y="3" width="1" height="1" fill="#000"/><rect x="10" y="3" width="1" height="1" fill="#555555"/><rect x="0" y="4" width="1" height="1" fill="#000"/><rect x="1" y="4" width="1" height="1" fill="#777777"/><rect x="2" y="4" width="1" height="1" fill="#222244"/><rect x="3" y="4" width="1" height="1" fill="#22aa44"/><rect x="4" y="4" width="1" height="1" fill="#222244"/><rect x="5" y="4" width="1" height="1" fill="#ee1111"/><rect x="6" y="4" width="1" height="1" fill="#ee2266"/><rect x="7" y="4" width="1" height="1" fill="#ee1111"/><rect x="8" y="4" width="1" height="1" fill="#777777"/><rect x="9" y="4" width="1" height="1" fill="#000"/><rect x="10" y="4" width="1" height="1" fill="#555555"/><rect x="0" y="5" width="1" height="1" fill="#000"/><rect x="1" y="5" width="1" height="1" fill="#777777"/><rect x="2" y="5" width="1" height="1" fill="#ee1111"/><rect x="3" y="5" width="1" height="1" fill="#ee2266"/><rect x="4" y="5" width="1" height="1" fill="#ee1111"/><rect x="5" y="5" width="1" height="1" fill="#222244"/><rect x="6" y="5" width="1" height="1" fill="#22aa44"/><rect x="7" y="5" width="1" height="1" fill="#222244"/><rect x="8" y="5" width="1" height="1" fill="#777777"/><rect x="9" y="5" width="1" height="1" fill="#000"/><rect x="10" y="5" width="1" height="1" fill="#555555"/><rect x="0" y="6" width="1" height="1" fill="#000"/><rect x="1" y="6" width="1" height="1" fill="#777777"/><rect x="2" y="6" width="1" height="1" fill="#ee2266"/><rect x="3" y="6" width="1" height="1" fill="#ee1111"/><rect x="4" y="6" width="1" height="1" fill="#ee2266"/><rect x="5" y="6" width="1" height="1" fill="#22aa44"/><rect x="6" y="6" width="1" height="1" fill="#222244"/><rect x="7" y="6" width="1" height="1" fill="#22aa44"/><rect x="8" y="6" width="1" height="1" fill="#777777"/><rect x="9" y="6" width="1" height="1" fill="#000"/><rect x="10" y="6" width="1" height="1" fill="#555555"/><rect x="0" y="7" width="1" height="1" fill="#000"/><rect x="1" y="7" width="1" height="1" fill="#777777"/><rect x="2" y="7" width="1" height="1" fill="#ee1111"/><rect x="3" y="7" width="1" height="1" fill="#ee2266"/><rect x="4" y="7" width="1" height="1" fill="#ee1111"/><rect x="5" y="7" width="1" height="1" fill="#222244"/><rect x="6" y="7" width="1" height="1" fill="#22aa44"/><rect x="7" y="7" width="1" height="1" fill="#222244"/><rect x="8" y="7" width="1" height="1" fill="#777777"/><rect x="9" y="7" width="1" height="1" fill="#000"/><rect x="10" y="7" width="1" height="1" fill="#555555"/><rect x="0" y="8" width="1" height="1" fill="#000"/><rect x="1" y="8" width="8" height="1" fill="#777777"/><rect x="9" y="8" width="1" height="1" fill="#000"/><rect x="10" y="8" width="1" height="1" fill="#555555"/><rect x="0" y="9" width="10" height="1" fill="#000"/><rect x="10" y="9" width="1" height="1" fill="#555555"/><rect x="1" y="10" width="10" height="1" fill="#555555"/></g><g id="cube" shape-rendering="crispEdges"><rect x="4" y="0" width="2" height="1" fill="#000"/><rect x="2" y="1" width="2" height="1" fill="#000"/><rect x="4" y="1" width="2" height="1" fill="#ff66cc"/><rect x="6" y="1" width="2" height="1" fill="#000"/><rect x="0" y="2" width="2" height="1" fill="#000"/><rect x="2" y="2" width="2" height="1" fill="#ffcc99"/><rect x="4" y="2" width="2" height="1" fill="#ff66cc"/><rect x="6" y="2" width="2" height="1" fill="#9999ff"/><rect x="8" y="2" width="2" height="1" fill="#000"/><rect x="0" y="3" width="1" height="1" fill="#000"/><rect x="1" y="3" width="1" height="1" fill="#22aa44"/><rect x="2" y="3" width="2" height="1" fill="#ffcc99"/><rect x="4" y="3" width="1" height="1" fill="#ff66cc"/><rect x="5" y="3" width="1" height="1" fill="#000"/><rect x="6" y="3" width="2" height="1" fill="#9999ff"/><rect x="8" y="3" width="1" height="1" fill="#ee1111"/><rect x="9" y="3" width="1" height="1" fill="#000"/><rect x="0" y="4" width="1" height="1" fill="#000"/><rect x="1" y="4" width="1" height="1" fill="#22aa44"/><rect x="2" y="4" width="2" height="1" fill="#5555dd"/><rect x="4" y="4" width="1" height="1" fill="#000"/><rect x="5" y="4" width="4" height="1" fill="#ee1111"/><rect x="9" y="4" width="1" height="1" fill="#000"/><rect x="0" y="5" width="1" height="1" fill="#000"/><rect x="1" y="5" width="1" height="1" fill="#22aa44"/><rect x="2" y="5" width="2" height="1" fill="#5555dd"/><rect x="4" y="5" width="1" height="1" fill="#ff6622"/><rect x="5" y="5" width="2" height="1" fill="#ee1111"/><rect x="7" y="5" width="2" height="1" fill="#5555dd"/><rect x="9" y="5" width="1" height="1" fill="#000"/><rect x="0" y="6" width="1" height="1" fill="#000"/><rect x="1" y="6" width="1" height="1" fill="#ff6622"/><rect x="2" y="6" width="2" height="1" fill="#ee2266"/><rect x="4" y="6" width="1" height="1" fill="#22aa44"/><rect x="5" y="6" width="1" height="1" fill="#ff6622"/><rect x="6" y="6" width="1" height="1" fill="#22aa44"/><rect x="7" y="6" width="2" height="1" fill="#5555dd"/><rect x="9" y="6" width="1" height="1" fill="#000"/><rect x="0" y="7" width="1" height="1" fill="#000"/><rect x="1" y="7" width="3" height="1" fill="#ee2266"/><rect x="4" y="7" width="3" height="1" fill="#22aa44"/><rect x="7" y="7" width="1" height="1" fill="#5555dd"/><rect x="8" y="7" width="1" height="1" fill="#555555"/><rect x="9" y="7" width="1" height="1" fill="#000"/><rect x="1" y="8" width="2" height="1" fill="#000"/><rect x="3" y="8" width="1" height="1" fill="#ee2266"/><rect x="4" y="8" width="2" height="1" fill="#22aa44"/><rect x="6" y="8" width="3" height="1" fill="#000"/><rect x="3" y="9" width="2" height="1" fill="#000"/><rect x="5" y="9" width="1" height="1" fill="#22aa44"/><rect x="6" y="9" width="1" height="1" fill="#000"/><rect x="4" y="10" width="2" height="1" fill="#000"/></g><g id="dylib" shape-rendering="crispEdges"><rect x="1" y="0" width="2" height="1" fill="#000"/><rect x="0" y="1" width="1" height="1" fill="#000"/><rect x="1" y="1" width="2" height="1" fill="#e8a860"/><rect x="3" y="1" width="7" height="1" fill="#000"/><rect x="0" y="2" width="1" height="1" fill="#000"/><rect x="1" y="2" width="1" height="1" fill="#e8a860"/><rect x="2" y="2" width="1" height="1" fill="#000"/><rect x="3" y="2" width="6" height="1" fill="#ffffff"/><rect x="9" y="2" width="1" height="1" fill="#000"/><rect x="0" y="3" width="2" height="1" fill="#000"/><rect x="3" y="3" width="1" height="1" fill="#ffffff"/><rect x="4" y="3" width="1" height="1" fill="#4444dd"/><rect x="5" y="3" width="1" height="1" fill="#00cc00"/><rect x="6" y="3" width="1" height="1" fill="#ee1111"/><rect x="7" y="3" width="1" height="1" fill="#ff6622"/><rect x="8" y="3" width="1" height="1" fill="#ffffff"/><rect x="9" y="3" width="1" height="1" fill="#000"/><rect x="3" y="4" width="1" height="1" fill="#ffffff"/><rect x="4" y="4" width="1" height="1" fill="#00cc00"/><rect x="5" y="4" width="1" height="1" fill="#4444dd"/><rect x="6" y="4" width="1" height="1" fill="#ff6622"/><rect x="7" y="4" width="1" height="1" fill="#ee1111"/><rect x="8" y="4" width="1" height="1" fill="#ffffff"/><rect x="9" y="4" width="1" height="1" fill="#000"/><rect x="3" y="5" width="1" height="1" fill="#ffffff"/><rect x="4" y="5" width="1" height="1" fill="#ee1111"/><rect x="5" y="5" width="1" height="1" fill="#ff6622"/><rect x="6" y="5" width="1" height="1" fill="#00cc00"/><rect x="7" y="5" width="1" height="1" fill="#4444dd"/><rect x="8" y="5" width="1" height="1" fill="#ffffff"/><rect x="9" y="5" width="1" height="1" fill="#000"/><rect x="3" y="6" width="1" height="1" fill="#ffffff"/><rect x="4" y="6" width="1" height="1" fill="#ff6622"/><rect x="5" y="6" width="1" height="1" fill="#ee1111"/><rect x="6" y="6" width="1" height="1" fill="#4444dd"/><rect x="7" y="6" width="1" height="1" fill="#00cc00"/><rect x="8" y="6" width="1" height="1" fill="#ffffff"/><rect x="9" y="6" width="1" height="1" fill="#000"/><rect x="11" y="6" width="1" height="1" fill="#000"/><rect x="2" y="7" width="1" height="1" fill="#000"/><rect x="3" y="7" width="6" height="1" fill="#ffffff"/><rect x="9" y="7" width="1" height="1" fill="#000"/><rect x="10" y="7" width="1" height="1" fill="#e8a860"/><rect x="11" y="7" width="1" height="1" fill="#000"/><rect x="2" y="8" width="8" height="1" fill="#000"/><rect x="10" y="8" width="1" height="1" fill="#e8a860"/><rect x="11" y="8" width="1" height="1" fill="#000"/><rect x="9" y="9" width="2" height="1" fill="#000"/></g><g id="pbox2" shape-rendering="crispEdges"><rect x="0" y="0" width="6" height="1" fill="#000"/><rect x="7" y="0" width="1" height="1" fill="#ffffff"/><rect x="8" y="0" width="1" height="1" fill="#000"/><rect x="0" y="1" width="1" height="1" fill="#000"/><rect x="1" y="1" width="4" height="1" fill="#999999"/><rect x="5" y="1" width="1" height="1" fill="#ffffff"/><rect x="8" y="1" width="1" height="1" fill="#000"/><rect x="9" y="1" width="1" height="1" fill="#ffffff"/><rect x="0" y="2" width="1" height="1" fill="#000"/><rect x="1" y="2" width="4" height="1" fill="#999999"/><rect x="5" y="2" width="1" height="1" fill="#ffffff"/><rect x="8" y="2" width="1" height="1" fill="#000"/><rect x="9" y="2" width="1" height="1" fill="#ffffff"/><rect x="0" y="3" width="1" height="1" fill="#000"/><rect x="1" y="3" width="4" height="1" fill="#999999"/><rect x="5" y="3" width="1" height="1" fill="#ffffff"/><rect x="8" y="3" width="1" height="1" fill="#000"/><rect x="9" y="3" width="1" height="1" fill="#ffffff"/><rect x="0" y="4" width="1" height="1" fill="#000"/><rect x="1" y="4" width="4" height="1" fill="#999999"/><rect x="5" y="4" width="1" height="1" fill="#ffffff"/><rect x="8" y="4" width="1" height="1" fill="#000"/><rect x="9" y="4" width="1" height="1" fill="#ffffff"/><rect x="0" y="5" width="1" height="1" fill="#000"/><rect x="1" y="5" width="5" height="1" fill="#ffffff"/><rect x="8" y="5" width="1" height="1" fill="#000"/><rect x="9" y="5" width="1" height="1" fill="#ffffff"/><rect x="8" y="6" width="1" height="1" fill="#000"/><rect x="9" y="6" width="1" height="1" fill="#ffffff"/><rect x="0" y="7" width="1" height="1" fill="#ffffff"/><rect x="8" y="7" width="1" height="1" fill="#000"/><rect x="9" y="7" width="1" height="1" fill="#ffffff"/><rect x="0" y="8" width="9" height="1" fill="#000"/><rect x="9" y="8" width="1" height="1" fill="#ffffff"/><rect x="1" y="9" width="9" height="1" fill="#ffffff"/></g><g id="sbox2" shape-rendering="crispEdges"><rect x="0" y="0" width="7" height="1" fill="#000"/><rect x="0" y="1" width="1" height="1" fill="#000"/><rect x="1" y="1" width="5" height="1" fill="#ffffff"/><rect x="6" y="1" width="1" height="1" fill="#000"/><rect x="7" y="1" width="1" height="1" fill="#ffffff"/><rect x="0" y="2" width="1" height="1" fill="#000"/><rect x="1" y="2" width="1" height="1" fill="#ffffff"/><rect x="2" y="2" width="4" height="1" fill="#999999"/><rect x="6" y="2" width="1" height="1" fill="#000"/><rect x="7" y="2" width="1" height="1" fill="#ffffff"/><rect x="0" y="3" width="1" height="1" fill="#000"/><rect x="1" y="3" width="1" height="1" fill="#ffffff"/><rect x="2" y="3" width="4" height="1" fill="#999999"/><rect x="6" y="3" width="1" height="1" fill="#000"/><rect x="7" y="3" width="1" height="1" fill="#ffffff"/><rect x="0" y="4" width="1" height="1" fill="#000"/><rect x="1" y="4" width="1" height="1" fill="#ffffff"/><rect x="2" y="4" width="4" height="1" fill="#999999"/><rect x="6" y="4" width="1" height="1" fill="#000"/><rect x="7" y="4" width="1" height="1" fill="#ffffff"/><rect x="0" y="5" width="1" height="1" fill="#000"/><rect x="1" y="5" width="1" height="1" fill="#ffffff"/><rect x="2" y="5" width="5" height="1" fill="#000"/><rect x="7" y="5" width="1" height="1" fill="#ffffff"/><rect x="1" y="6" width="7" height="1" fill="#ffffff"/></g><g id="rsrc" shape-rendering="crispEdges"><rect x="1" y="0" width="4" height="1" fill="#000"/><rect x="0" y="1" width="1" height="1" fill="#000"/><rect x="3" y="1" width="1" height="1" fill="#ee1111"/><rect x="4" y="1" width="1" height="1" fill="#000"/><rect x="0" y="2" width="1" height="1" fill="#000"/><rect x="3" y="2" width="1" height="1" fill="#000"/><rect x="4" y="2" width="1" height="1" fill="#ffcc99"/><rect x="5" y="2" width="1" height="1" fill="#000"/><rect x="3" y="3" width="1" height="1" fill="#000"/><rect x="4" y="3" width="2" height="1" fill="#ffcc99"/><rect x="6" y="3" width="1" height="1" fill="#000"/><rect x="4" y="4" width="1" height="1" fill="#000"/><rect x="5" y="4" width="1" height="1" fill="#00cc00"/><rect x="6" y="4" width="1" height="1" fill="#000"/><rect x="3" y="5" width="5" height="1" fill="#000"/><rect x="2" y="6" width="1" height="1" fill="#000"/><rect x="3" y="6" width="1" height="1" fill="#ffffff"/><rect x="4" y="6" width="1" height="1" fill="#e0e0ff"/><rect x="5" y="6" width="2" height="1" fill="#ffffff"/><rect x="7" y="6" width="1" height="1" fill="#000"/><rect x="2" y="7" width="1" height="1" fill="#000"/><rect x="3" y="7" width="1" height="1" fill="#ffffff"/><rect x="4" y="7" width="1" height="1" fill="#e0e0ff"/><rect x="5" y="7" width="2" height="1" fill="#ffffff"/><rect x="7" y="7" width="1" height="1" fill="#000"/><rect x="2" y="8" width="1" height="1" fill="#000"/><rect x="3" y="8" width="4" height="1" fill="#ffffff"/><rect x="7" y="8" width="1" height="1" fill="#000"/><rect x="2" y="9" width="1" height="1" fill="#000"/><rect x="3" y="9" width="4" height="1" fill="#ffffff"/><rect x="7" y="9" width="1" height="1" fill="#000"/><rect x="2" y="10" width="1" height="1" fill="#000"/><rect x="3" y="10" width="1" height="1" fill="#ffffff"/><rect x="4" y="10" width="1" height="1" fill="#ee1111"/><rect x="5" y="10" width="2" height="1" fill="#ffffff"/><rect x="7" y="10" width="1" height="1" fill="#000"/><rect x="2" y="11" width="6" height="1" fill="#000"/></g></defs>
<defs>
<pattern id="chk" width="2" height="2" patternUnits="userSpaceOnUse"><rect width="2" height="2" fill="#fff"/><rect width="1" height="1" fill="#9999ff"/><rect x="1" y="1" width="1" height="1" fill="#9999ff"/></pattern>
<pattern id="chkf" width="2" height="2" patternUnits="userSpaceOnUse"><rect width="2" height="2" fill="#e8e8ff"/><rect width="1" height="1" fill="#b8b8f0"/><rect x="1" y="1" width="1" height="1" fill="#b8b8f0"/></pattern>
<symbol id="tri" viewBox="0 0 7 11" width="7" height="11"><path d="M0.5 0.5 L5.8 5.5 L0.5 10.5 Z" fill="url(#chk)" stroke="#000" stroke-width="1.1"/></symbol>
<symbol id="fold" viewBox="0 0 12 10" width="12" height="10"><path d="M0.5 1.5 H4 L5 0.5 H9.5 L10.5 1.5 V9.5 H0.5 Z" fill="url(#chkf)" stroke="#000" stroke-width="1"/></symbol>
<symbol id="foldsel" viewBox="0 0 12 10" width="12" height="10"><path d="M0.5 1.5 H4 L5 0.5 H9.5 L10.5 1.5 V9.5 H0.5 Z" fill="#333366" stroke="#000" stroke-width="1"/><path d="M2 4 H9 M2 6 H9 M2 8 H9" stroke="#6666aa" stroke-width="0.8" stroke-dasharray="1 1"/></symbol>
<symbol id="mth" viewBox="0 0 12 12" width="12" height="12"><path d="M0.5 0.5 H5 L7 2.5 V9.5 H0.5 Z" fill="#ddd" stroke="#555" stroke-width="1"/><path d="M2.5 5.5 H8.5 L11 8 L8.5 10.5 H2.5 Z" fill="#cfe" stroke="#046" stroke-width="1"/><rect x="6" y="8" width="5.5" height="3.5" fill="#1a1"/></symbol>
<symbol id="cls" viewBox="0 0 12 12" width="12" height="12"><path d="M0.5 0.5 H5 L7 2.5 V8.5 H0.5 Z" fill="#ddd" stroke="#555" stroke-width="1"/><circle cx="7.5" cy="6" r="1.6" fill="#e04010"/><circle cx="4.5" cy="10" r="1.6" fill="#e04010"/><circle cx="9.5" cy="10" r="1.6" fill="#e04010"/><path d="M7.5 6 L4.5 10 M7.5 6 L9.5 10" stroke="#e04010" stroke-width="0.8"/></symbol>
<symbol id="var" viewBox="0 0 12 12" width="12" height="12"><path d="M0.5 0.5 H5 L7 2.5 V9.5 H0.5 Z" fill="#ddd" stroke="#555" stroke-width="1"/><path d="M4 6 L9 11 M9 6 L4 11" stroke="#3344cc" stroke-width="2"/></symbol>
<symbol id="sect" viewBox="0 0 12 10" width="12" height="10"><rect x="0.5" y="0.5" width="10" height="8" rx="1" fill="#ffffc0" stroke="#444" stroke-width="1"/><rect x="1" y="1" width="9" height="2" fill="#f0e020"/><rect x="1.5" y="9" width="10" height="1" fill="#999"/></symbol>
<symbol id="lib" viewBox="0 0 12 10" width="12" height="10"><rect x="0.5" y="0.5" width="10" height="8" rx="1" fill="#807830" stroke="#333" stroke-width="1"/><rect x="1.5" y="9" width="10" height="1" fill="#999"/></symbol>
<symbol id="cube" viewBox="0 0 12 12" width="12" height="12"><path d="M6 0.5 L11.5 3 V9 L6 11.5 L0.5 9 V3 Z" fill="#4a4" stroke="#222" stroke-width="1"/><path d="M0.8 3.2 L6 5.5 L11.2 3.2 L6 0.8 Z" fill="#d6c"/><path d="M6 5.5 V11.2 L11.2 9 V3.2 Z" fill="#c33"/><rect x="1.5" y="6" width="3" height="3" fill="#55c"/><rect x="7.5" y="7" width="2.5" height="2.5" fill="#55b"/></symbol>
<symbol id="doccol" viewBox="0 0 12 12" width="12" height="12"><rect x="0.5" y="0.5" width="10" height="10" fill="#eee" stroke="#000" stroke-width="1"/><rect x="2" y="2" width="7" height="7" fill="#d33"/><rect x="2" y="2" width="3.5" height="3.5" fill="#3a3"/><rect x="5.5" y="5.5" width="3.5" height="3.5" fill="#44c"/></symbol>
<symbol id="docdark" viewBox="0 0 12 12" width="12" height="12"><rect x="0.5" y="0.5" width="10" height="10" fill="#333" stroke="#000" stroke-width="1"/><rect x="2" y="2" width="7" height="7" fill="#555"/><path d="M3 8 L8 3 M3 3 L8 8" stroke="#e33" stroke-width="1.5"/></symbol>
<symbol id="dylib" viewBox="0 0 13 12" width="13" height="12"><rect x="2.5" y="2.5" width="8" height="7" fill="#ddd" stroke="#000" stroke-width="1"/><rect x="4" y="4" width="5" height="4" fill="#c44"/><rect x="4" y="4" width="2.5" height="2" fill="#4a4"/><circle cx="2.5" cy="3" r="2" fill="none" stroke="#d90" stroke-width="1.2"/><circle cx="10.5" cy="9" r="2" fill="none" stroke="#d90" stroke-width="1.2"/></symbol>
<symbol id="rsrc" viewBox="0 0 12 12" width="12" height="12"><path d="M3 11.5 Q1 8 4 5 L6 1 Q9 2 8 5 Q11 8 8 11.5 Z" fill="#fff" stroke="#000" stroke-width="1"/><rect x="3" y="0.5" width="3" height="2" fill="#e44"/></symbol>
<symbol id="redarr" viewBox="0 0 8 9" width="8" height="9"><path d="M0.5 3 H4 V0.5 L7.5 4.5 L4 8.5 V6 H0.5 Z" fill="#d22" stroke="#600" stroke-width="0.6"/></symbol>
<symbol id="grayarr" viewBox="0 0 8 9" width="8" height="9"><path d="M0.5 3 H4 V0.5 L7.5 4.5 L4 8.5 V6 H0.5 Z" fill="#aaa" stroke="#333" stroke-width="0.8"/></symbol>
<symbol id="pbox" viewBox="0 0 11 10" width="11" height="10"><rect x="0.5" y="0.5" width="7" height="6" fill="#aaa" stroke="#444" stroke-width="1"/><path d="M8.5 1.5 V8.5 H1.5" fill="none" stroke="#444" stroke-width="1"/><path d="M9.5 1 V9.5 H1" fill="none" stroke="#fff" stroke-width="1"/></symbol>
<symbol id="sbox" viewBox="0 0 8 8" width="8" height="8"><rect x="0.5" y="0.5" width="6" height="6" fill="#bbb" stroke="#444" stroke-width="1"/><path d="M7.5 1 V7.5 H1" fill="none" stroke="#fff" stroke-width="1"/></symbol>
</defs>
<text x="44" y="60" font-family="Liberation Sans" font-size="8" font-weight="bold" fill="#000" textLength="49" lengthAdjust="spacingAndGlyphs">Contents of</text>
<use href="#cube" transform="translate(44,63) scale(1.5)"/>
<text x="66" y="76" font-family="Liberation Sans" font-size="13" font-weight="bold" fill="#fff" textLength="62" lengthAdjust="spacingAndGlyphs">paint-app</text>
<text x="65" y="75" font-family="Liberation Sans" font-size="13" font-weight="bold" fill="#000" textLength="62" lengthAdjust="spacingAndGlyphs">paint-app</text>
<use href="#pbox2" x="208" y="55"/>
<use href="#redarr" x="210" y="69"/>
<use href="#sbox2" x="30" y="226"/>
<use href="#redarr" x="30" y="240"/>
<text x="46" y="231" font-family="Liberation Sans" font-size="8" font-weight="bold" fill="#000" textLength="50" lengthAdjust="spacingAndGlyphs">Contents of</text>
<use href="#doccol" transform="translate(47,234) scale(1.2)"/>
<text x="69" y="247" font-family="Liberation Sans" font-size="13" font-weight="bold" fill="#fff" textLength="62" lengthAdjust="spacingAndGlyphs">paint-app</text>
<text x="68" y="246" font-family="Liberation Sans" font-size="13" font-weight="bold" fill="#000" textLength="62" lengthAdjust="spacingAndGlyphs">paint-app</text>
<use href="#pbox2" x="208" y="226"/>
<use href="#redarr" x="210" y="240"/>
<use href="#sbox2" x="231" y="55"/>
<use href="#redarr" x="231" y="69"/>
<text x="248" y="60" font-family="Liberation Sans" font-size="8" font-weight="bold" fill="#000" textLength="50" lengthAdjust="spacingAndGlyphs">Contents of</text>
<path d="M248.5 78.5 V67.5 L249.5 66.5 H253.5 L255.5 68.5 H262.5 L263.5 69.5 V78.5 Z" fill="url(#chk)" stroke="#000" stroke-width="1" shape-rendering="crispEdges"/>
<text x="269" y="76" font-family="Liberation Sans" font-size="13" font-weight="bold" fill="#fff" textLength="97" lengthAdjust="spacingAndGlyphs">selection-tools</text>
<text x="268" y="75" font-family="Liberation Sans" font-size="13" font-weight="bold" fill="#000" textLength="97" lengthAdjust="spacingAndGlyphs">selection-tools</text>
<use href="#pbox2" x="839" y="55"/>
<use href="#grayarr" x="840" y="69"/>
<use href="#dylib" x="65" y="87"/>
<text x="83" y="95" font-family="Liberation Sans" font-size="10" font-weight="normal" fill="#000" textLength="25" lengthAdjust="spacingAndGlyphs" stroke="#000" stroke-width="0.3">Dylan</text>
<rect x="38" y="105" width="5" height="5" fill="#ee6633"/>
<use href="#tri" x="52" y="102"/>
<use href="#cube" x="65" y="102"/>
<text x="83" y="111" font-family="Liberation Sans" font-size="10" font-weight="normal" fill="#000" textLength="56" lengthAdjust="spacingAndGlyphs" stroke="#000" stroke-width="0.3">mac-toolbox</text>
<rect x="38" y="121" width="5" height="5" fill="#ee6633"/>
<use href="#tri" x="52" y="118"/>
<use href="#cube" x="65" y="118"/>
<text x="83" y="127" font-family="Liberation Sans" font-size="10" font-weight="normal" fill="#000" textLength="78" lengthAdjust="spacingAndGlyphs" stroke="#000" stroke-width="0.3">dylan-framework</text>
<use href="#tri" x="52" y="134"/>
<use href="#doccol" x="65" y="134"/>
<text x="83" y="143" font-family="Liberation Sans" font-size="10" font-weight="normal" fill="#000" textLength="49" lengthAdjust="spacingAndGlyphs" stroke="#000" stroke-width="0.3">Dylan-user</text>
<use href="#tri" x="52" y="150"/>
<use href="#docdark" x="65" y="150"/>
<rect x="83" y="150" width="43" height="1" fill="#000"/>
<rect x="83" y="160" width="43" height="1" fill="#000"/>
<rect x="83" y="150" width="1" height="11" fill="#000"/>
<rect x="125" y="150" width="1" height="11" fill="#000"/>
<text x="83" y="159" font-family="Liberation Sans" font-size="10" font-weight="normal" fill="#000" textLength="40" lengthAdjust="spacingAndGlyphs" stroke="#000" stroke-width="0.3">paint-app</text>
<use href="#rsrc" x="65" y="167"/>
<text x="83" y="175" font-family="Liberation Sans" font-size="10" font-weight="normal" fill="#000" textLength="64" lengthAdjust="spacingAndGlyphs" stroke="#000" stroke-width="0.3">paint-app.rsrc</text>
<use href="#tri" x="52" y="257"/>
<use href="#fold" x="65" y="258"/>
<text x="83" y="266" font-family="Liberation Sans" font-size="10" font-weight="normal" fill="#000" textLength="77" lengthAdjust="spacingAndGlyphs" stroke="#000" stroke-width="0.3">paint-app-library</text>
<use href="#tri" x="52" y="273"/>
<use href="#fold" x="65" y="274"/>
<text x="83" y="282" font-family="Liberation Sans" font-size="10" font-weight="normal" fill="#000" textLength="79" lengthAdjust="spacingAndGlyphs" stroke="#000" stroke-width="0.3">paint-app-macros</text>
<use href="#tri" x="52" y="289"/>
<use href="#fold" x="65" y="290"/>
<text x="83" y="298" font-family="Liberation Sans" font-size="10" font-weight="normal" fill="#000" textLength="48" lengthAdjust="spacingAndGlyphs" stroke="#000" stroke-width="0.3">paint-view</text>
<use href="#tri" x="52" y="305"/>
<use href="#fold" x="65" y="306"/>
<text x="83" y="314" font-family="Liberation Sans" font-size="10" font-weight="normal" fill="#000" textLength="21" lengthAdjust="spacingAndGlyphs" stroke="#000" stroke-width="0.3">tools</text>
<use href="#tri" x="52" y="321"/>
<use href="#foldsel" x="65" y="322"/>
<rect x="83" y="321" width="67" height="1" fill="#000"/>
<rect x="83" y="331" width="67" height="1" fill="#000"/>
<rect x="83" y="321" width="1" height="11" fill="#000"/>
<rect x="149" y="321" width="1" height="11" fill="#000"/>
<text x="83" y="330" font-family="Liberation Sans" font-size="10" font-weight="normal" fill="#000" textLength="64" lengthAdjust="spacingAndGlyphs" stroke="#000" stroke-width="0.3">selection-tools</text>
<use href="#tri" x="52" y="337"/>
<use href="#fold" x="65" y="338"/>
<text x="83" y="346" font-family="Liberation Sans" font-size="10" font-weight="normal" fill="#000" textLength="58" lengthAdjust="spacingAndGlyphs" stroke="#000" stroke-width="0.3">window-utils</text>
<use href="#tri" x="52" y="353"/>
<use href="#fold" x="65" y="354"/>
<text x="83" y="362" font-family="Liberation Sans" font-size="10" font-weight="normal" fill="#000" textLength="48" lengthAdjust="spacingAndGlyphs" stroke="#000" stroke-width="0.3">paint-tools</text>
<use href="#tri" x="52" y="369"/>
<use href="#fold" x="65" y="370"/>
<text x="83" y="378" font-family="Liberation Sans" font-size="10" font-weight="normal" fill="#000" textLength="68" lengthAdjust="spacingAndGlyphs" stroke="#000" stroke-width="0.3">paint-document</text>
<use href="#tri" x="52" y="385"/>
<use href="#fold" x="65" y="386"/>
<text x="83" y="394" font-family="Liberation Sans" font-size="10" font-weight="normal" fill="#000" textLength="67" lengthAdjust="spacingAndGlyphs" stroke="#000" stroke-width="0.3">paint-command</text>
<use href="#tri" x="52" y="401"/>
<use href="#fold" x="65" y="402"/>
<text x="83" y="410" font-family="Liberation Sans" font-size="10" font-weight="normal" fill="#000" textLength="41" lengthAdjust="spacingAndGlyphs" stroke="#000" stroke-width="0.3">paint-app</text>
<svg x="230" y="83" width="605" height="534" overflow="hidden"><g transform="translate(-230,-83)">
<use href="#tri" x="253" y="86"/>
<use href="#lib" x="266" y="86"/>
<rect x="284" y="86" width="291" height="11" fill="#000"/>
<text x="285" y="95" font-family="Liberation Sans" font-size="10" font-weight="normal" fill="#fff" textLength="287" lengthAdjust="spacingAndGlyphs" stroke="#fff" stroke-width="0.3">Copyright © 1994 by Apple Computer, Inc.  All rights reserved.</text>
<use href="#tri" x="253" y="102"/>
<use href="#cls" x="266" y="102"/>
<text x="284" y="111" font-family="Liberation Sans" font-size="10" font-weight="normal" fill="#000" textLength="143" lengthAdjust="spacingAndGlyphs" stroke="#000" stroke-width="0.3">&lt;selection-tracker&gt; (&lt;tracker&gt;)</text>
<use href="#tri" x="253" y="118"/>
<use href="#mth" x="266" y="118"/>
<text x="284" y="127" font-family="Liberation Sans" font-size="10" font-weight="normal" fill="#000" textLength="260.5" lengthAdjust="spacingAndGlyphs" stroke="#000" stroke-width="0.3">initialize (tracker :: &lt;selection-tracker&gt;, #key tool: tool)</text>
<use href="#tri" x="253" y="134"/>
<use href="#mth" x="266" y="134"/>
<text x="284" y="143" font-family="Liberation Sans" font-size="10" font-weight="normal" fill="#000" textLength="199.6" lengthAdjust="spacingAndGlyphs" stroke="#000" stroke-width="0.3">track-begin (tracker :: &lt;selection-tracker&gt;)</text>
<use href="#tri" x="253" y="150"/>
<use href="#mth" x="266" y="150"/>
<text x="284" y="159" font-family="Liberation Sans" font-size="10" font-weight="normal" fill="#000" textLength="199.6" lengthAdjust="spacingAndGlyphs" stroke="#000" stroke-width="0.3">adjust-ants (tracker :: &lt;selection-tracker&gt;)</text>
<use href="#tri" x="253" y="166"/>
<use href="#mth" x="266" y="166"/>
<text x="284" y="175" font-family="Liberation Sans" font-size="10" font-weight="normal" fill="#000" textLength="534" lengthAdjust="spacingAndGlyphs" stroke="#000" stroke-width="0.3">mouse-moved? (tracker :: &lt;selection-tracker&gt;, last-point :: &lt;point&gt;, current-point :: &lt;point&gt;) =&gt; result :: &lt;boolean&gt; ;</text>
<use href="#tri" x="253" y="182"/>
<use href="#cls" x="266" y="182"/>
<text x="284" y="191" font-family="Liberation Sans" font-size="10" font-weight="normal" fill="#000" textLength="199" lengthAdjust="spacingAndGlyphs" stroke="#000" stroke-width="0.3">&lt;rect-select-tracker&gt; (&lt;selection-tracker&gt;)</text>
<use href="#tri" x="253" y="198"/>
<use href="#mth" x="266" y="198"/>
<text x="284" y="207" font-family="Liberation Sans" font-size="10" font-weight="normal" fill="#000" textLength="210.7" lengthAdjust="spacingAndGlyphs" stroke="#000" stroke-width="0.3">track-begin (tracker :: &lt;rect-select-tracker&gt;)</text>
<use href="#tri" x="253" y="214"/>
<use href="#mth" x="266" y="214"/>
<text x="284" y="223" font-family="Liberation Sans" font-size="10" font-weight="normal" fill="#000" textLength="550" lengthAdjust="spacingAndGlyphs" stroke="#000" stroke-width="0.3">track-feedback (tracker :: &lt;rect-select-tracker&gt;, last-point :: &lt;point&gt;, current-point :: &lt;point&gt;, mode :: &lt;symbol&gt;) =&gt; ( )</text>
<use href="#tridn" x="249" y="233"/>
<use href="#mth" x="266" y="230"/>
<text x="284" y="240" font-family="Liberation Mono" font-size="10" font-weight="normal" fill="#000" stroke="#000" stroke-width="0.15">define method </text>
<text x="368" y="240" font-family="Liberation Mono" font-size="10" font-weight="bold" fill="#000" textLength="63" lengthAdjust="spacingAndGlyphs">track-end</text>
<text x="431" y="240" font-family="Liberation Mono" font-size="10" font-weight="normal" fill="#000" stroke="#000" stroke-width="0.15"> (tracker :: &lt;rect-select-tracker&gt;,</text>
<text x="443" y="251" font-family="Liberation Mono" font-size="10" font-weight="normal" fill="#000" stroke="#000" stroke-width="0.15">final-point :: &lt;point&gt;) =&gt; ()</text>
<text x="296" y="262" font-family="Liberation Mono" font-size="10" font-weight="normal" fill="#000" stroke="#000" stroke-width="0.15">// turn it off, since the view will draw it.</text>
<text x="296" y="273" font-family="Liberation Mono" font-size="10" font-weight="normal" fill="#000" stroke="#000" stroke-width="0.15">track-feedback(tracker, final-point, final-point, #"off");</text>
<text x="296" y="295" font-family="Liberation Mono" font-size="10" font-weight="normal" fill="#000" stroke="#000" stroke-width="0.15">let draw-rect = make(&lt;rect&gt;);</text>
<text x="296" y="306" font-family="Liberation Mono" font-size="10" font-weight="normal" fill="#000" stroke="#000" stroke-width="0.15">set-rect-from-points(draw-rect, tracker.start-point, final-point);</text>
<text x="296" y="317" font-family="Liberation Mono" font-size="10" font-weight="normal" fill="#000" stroke="#000" stroke-width="0.15">tracker.tracker-view.selection-region := draw-rect;</text>
<text x="284" y="328" font-family="Liberation Mono" font-size="10" font-weight="normal" fill="#000" stroke="#000" stroke-width="0.15">end method;</text>
<use href="#tri" x="253" y="333"/>
<use href="#sect" x="266" y="333"/>
<text x="284" y="342" font-family="Liberation Sans" font-size="10" font-weight="normal" fill="#000" textLength="38.2" lengthAdjust="spacingAndGlyphs" stroke="#000" stroke-width="0.3">Dragging</text>
<use href="#tri" x="253" y="349"/>
<use href="#var" x="266" y="349"/>
<text x="284" y="358" font-family="Liberation Sans" font-size="10" font-weight="normal" fill="#000" textLength="55.4" lengthAdjust="spacing" stroke="#000" stroke-width="0.3">*live-drag*</text>
<use href="#tri" x="253" y="365"/>
<use href="#cls" x="266" y="365"/>
<text x="284" y="374" font-family="Liberation Sans" font-size="10" font-weight="normal" fill="#000" textLength="183.5" lengthAdjust="spacingAndGlyphs" stroke="#000" stroke-width="0.3">&lt;dragger-tracker&gt; (&lt;selection-tracker&gt;)</text>
<use href="#tri" x="253" y="381"/>
<use href="#mth" x="266" y="381"/>
<text x="284" y="390" font-family="Liberation Sans" font-size="10" font-weight="normal" fill="#000" textLength="195" lengthAdjust="spacingAndGlyphs" stroke="#000" stroke-width="0.3">track-begin (tracker :: &lt;dragger-tracker&gt;)</text>
<use href="#tri" x="253" y="397"/>
<use href="#mth" x="266" y="397"/>
<text x="284" y="406" font-family="Liberation Sans" font-size="10" font-weight="normal" fill="#000" textLength="534.4" lengthAdjust="spacingAndGlyphs" stroke="#000" stroke-width="0.3">track-feedback (tracker :: &lt;dragger-tracker&gt;, last-point :: &lt;point&gt;, current-point :: &lt;point&gt;, mode :: &lt;symbol&gt;) =&gt; ( )</text>
<use href="#tri" x="253" y="413"/>
<use href="#mth" x="266" y="413"/>
<text x="284" y="422" font-family="Liberation Sans" font-size="10" font-weight="normal" fill="#000" textLength="286.6" lengthAdjust="spacingAndGlyphs" stroke="#000" stroke-width="0.3">track-end (tracker :: &lt;dragger-tracker&gt;, final-point :: &lt;point&gt;)</text>
<use href="#tri" x="253" y="429"/>
<use href="#var" x="266" y="429"/>
<text x="284" y="438" font-family="Liberation Sans" font-size="10" font-weight="normal" fill="#000" textLength="125.7" lengthAdjust="spacing" stroke="#000" stroke-width="0.3">$rect-select-tool-cursor-id</text>
<use href="#tri" x="253" y="445"/>
<use href="#var" x="266" y="445"/>
<text x="284" y="454" font-family="Liberation Sans" font-size="10" font-weight="normal" fill="#000" textLength="135" lengthAdjust="spacingAndGlyphs" stroke="#000" stroke-width="0.3">$rect-select-tool-name-index</text>
<use href="#tri" x="253" y="461"/>
<use href="#cls" x="266" y="461"/>
<text x="284" y="470" font-family="Liberation Sans" font-size="10" font-weight="normal" fill="#000" textLength="137" lengthAdjust="spacingAndGlyphs" stroke="#000" stroke-width="0.3">&lt;drag-command&gt; (&lt;command&gt;)</text>
<use href="#tri" x="253" y="477"/>
<use href="#mth" x="266" y="477"/>
<text x="284" y="486" font-family="Liberation Sans" font-size="10" font-weight="normal" fill="#000" textLength="168" lengthAdjust="spacingAndGlyphs" stroke="#000" stroke-width="0.3">undoit (command :: &lt;drag-command&gt;)</text>
<use href="#tri" x="253" y="493"/>
<use href="#mth" x="266" y="493"/>
<text x="284" y="502" font-family="Liberation Sans" font-size="10" font-weight="normal" fill="#000" textLength="168" lengthAdjust="spacingAndGlyphs" stroke="#000" stroke-width="0.3">redoit (command :: &lt;drag-command&gt;)</text>
<use href="#tri" x="253" y="509"/>
<use href="#cls" x="266" y="509"/>
<text x="284" y="518" font-family="Liberation Sans" font-size="10" font-weight="normal" fill="#000" textLength="109" lengthAdjust="spacingAndGlyphs" stroke="#000" stroke-width="0.3">&lt;selection-tool&gt; (&lt;tool&gt;)</text>
<use href="#tri" x="253" y="525"/>
<use href="#mth" x="266" y="525"/>
<text x="284" y="534" font-family="Liberation Sans" font-size="10" font-weight="normal" fill="#000" textLength="563.8" lengthAdjust="spacingAndGlyphs" stroke="#000" stroke-width="0.3">behavior-event (tool :: &lt;selection-tool&gt;, next :: &lt;list&gt;, view :: &lt;paint-view&gt;, event :: &lt;mouse-down-event&gt;, id :: &lt;symbol&gt;)</text>
<use href="#tri" x="253" y="541"/>
<use href="#mth" x="266" y="541"/>
<text x="284" y="550" font-family="Liberation Sans" font-size="10" font-weight="normal" fill="#000" textLength="562.6" lengthAdjust="spacingAndGlyphs" stroke="#000" stroke-width="0.3">behavior-set-cursor (tool :: &lt;selection-tool&gt;, next :: &lt;list&gt;, view :: &lt;view&gt;, mouse :: &lt;point&gt;, cursor-region :: &lt;qd-region&gt;)</text>
<use href="#tri" x="253" y="557"/>
<use href="#cls" x="266" y="557"/>
<text x="284" y="566" font-family="Liberation Mono" font-size="10" font-weight="normal" fill="#000" stroke="#000" stroke-width="0.15">&lt;rect-select-tool&gt; (&lt;selecti</text>
</g></svg>
<rect x="6" y="671" width="594" height="91" fill="#000"/>
<rect x="600" y="672" width="1" height="91" fill="#000"/>
<rect x="7" y="762" width="594" height="1" fill="#000"/>
<rect x="7" y="672" width="592" height="89" fill="#c6c6c6"/>
<rect x="7" y="672" width="592" height="1" fill="#fff"/>
<rect x="7" y="672" width="1" height="89" fill="#fff"/>
<rect x="598" y="673" width="1" height="88" fill="#aaa"/>
<rect x="8" y="760" width="591" height="1" fill="#aaa"/>
<defs><pattern id="grip" width="3" height="3" patternUnits="userSpaceOnUse"><rect width="3" height="3" fill="#ccc"/><rect x="0" y="0" width="1" height="1" fill="#666"/><rect x="1" y="1" width="1" height="1" fill="#fff"/></pattern></defs>
<rect x="9" y="685" width="9" height="52" fill="url(#grip)"/>
<rect x="9" y="674" width="8" height="1" fill="#000"/>
<rect x="9" y="681" width="8" height="1" fill="#000"/>
<rect x="9" y="674" width="1" height="8" fill="#000"/>
<rect x="16" y="674" width="1" height="8" fill="#000"/>
<rect x="10" y="675" width="6" height="6" fill="url(#gbox)"/>
<rect x="19" y="674" width="578" height="1" fill="#000"/>
<rect x="19" y="758" width="578" height="1" fill="#000"/>
<rect x="19" y="674" width="1" height="85" fill="#000"/>
<rect x="596" y="674" width="1" height="85" fill="#000"/>
<rect x="20" y="675" width="576" height="18" fill="#acacac"/>
<rect x="20" y="675" width="576" height="1" fill="#777"/>
<rect x="20" y="692" width="576" height="1" fill="#eee"/>
<rect x="595" y="675" width="1" height="18" fill="#eee"/>
<rect x="20" y="693" width="576" height="1" fill="#000"/>
<rect x="20" y="694" width="576" height="64" fill="#ccccff"/>
<rect x="20" y="694" width="576" height="1" fill="#fff"/>
<rect x="595" y="695" width="1" height="63" fill="#9999ee"/>
<rect x="20" y="757" width="576" height="1" fill="#9999ee"/>
<path d="M255 694 L258 682 Q260 678 264 678 H300 Q304 678 306 682 L309 694 Z" fill="#ffff99" stroke="#000" stroke-width="1"/>
<text x="269.4" y="689" font-family="Liberation Sans" font-size="11" font-weight="normal" fill="#000" textLength="22" lengthAdjust="spacingAndGlyphs" stroke="#000" stroke-width="0.3">URLs</text>
<path d="M190 694 L193 682 Q195 678 199 678 H247 Q251 678 253 682 L256 694 Z" fill="#99ff99" stroke="#000" stroke-width="1"/>
<text x="204.7" y="689" font-family="Liberation Sans" font-size="11" font-weight="normal" fill="#000" textLength="33" lengthAdjust="spacingAndGlyphs" stroke="#000" stroke-width="0.3">Folders</text>
<path d="M109 694 L112 682 Q114 678 118 678 H182 Q186 678 188 682 L191 694 Z" fill="#ffcccc" stroke="#000" stroke-width="1"/>
<text x="124.4" y="689" font-family="Liberation Sans" font-size="11" font-weight="normal" fill="#000" textLength="47.6" lengthAdjust="spacingAndGlyphs" stroke="#000" stroke-width="0.3">Documents</text>
<path d="M20 694 L20 686 Q22 678 30 678 H102 Q106 678 108 682 L112 694 Z" fill="#ccccff" stroke="#000" stroke-width="1"/>
<rect x="21" y="694" width="91" height="1" fill="#ccccff"/>
<text x="39" y="689" font-family="Liberation Sans" font-size="11" font-weight="normal" fill="#000" textLength="54" lengthAdjust="spacingAndGlyphs" stroke="#000" stroke-width="0.3">Applications</text>
<rect x="21" y="693" width="90" height="2" fill="#ccccff"/>
<rect x="91" y="695" width="1" height="47" fill="#9999ee"/>
<rect x="92" y="695" width="1" height="47" fill="#fff"/>
<rect x="163" y="695" width="1" height="47" fill="#9999ee"/>
<rect x="164" y="695" width="1" height="47" fill="#fff"/>
<rect x="235" y="695" width="1" height="47" fill="#9999ee"/>
<rect x="236" y="695" width="1" height="47" fill="#fff"/>
<rect x="307" y="695" width="1" height="47" fill="#9999ee"/>
<rect x="308" y="695" width="1" height="47" fill="#fff"/>
<rect x="379" y="695" width="1" height="47" fill="#9999ee"/>
<rect x="380" y="695" width="1" height="47" fill="#fff"/>
<rect x="451" y="695" width="1" height="47" fill="#9999ee"/>
<rect x="452" y="695" width="1" height="47" fill="#fff"/>
<rect x="523" y="695" width="1" height="47" fill="#9999ee"/>
<rect x="524" y="695" width="1" height="47" fill="#fff"/>
<rect x="20" y="742" width="576" height="1" fill="#9999ee"/>
<rect x="20" y="743" width="576" height="1" fill="#fff"/>
<text x="24.4" y="738" font-family="Liberation Sans" font-size="11" font-weight="normal" fill="#000" textLength="62.2" lengthAdjust="spacingAndGlyphs" stroke="#000" stroke-width="0.3">Adobe Photo...</text>
<text x="96" y="738" font-family="Liberation Sans" font-size="11" font-weight="normal" fill="#000" textLength="62.8" lengthAdjust="spacingAndGlyphs" stroke="#000" stroke-width="0.3">FrameMaker5</text>
<text x="183.75" y="738" font-family="Liberation Sans" font-size="11" font-weight="normal" fill="#000" textLength="30.7" lengthAdjust="spacingAndGlyphs" stroke="#000" stroke-width="0.3">Mirror</text>
<text x="240.6" y="738" font-family="Liberation Sans" font-size="11" font-weight="normal" fill="#000" textLength="62.4" lengthAdjust="spacingAndGlyphs" stroke="#000" stroke-width="0.3">Adobe® Pag...</text>
<text x="312.5" y="738" font-family="Liberation Sans" font-size="11" font-weight="normal" fill="#000" textLength="62.5" lengthAdjust="spacingAndGlyphs" stroke="#000" stroke-width="0.3">Netscape Na...</text>
<defs><radialGradient id="eyeg" cx="0.45" cy="0.55" r="0.6"><stop offset="0" stop-color="#fff"/><stop offset="0.7" stop-color="#ccc"/><stop offset="1" stop-color="#555"/></radialGradient><linearGradient id="nsg" x1="0" y1="0" x2="0" y2="1"><stop offset="0" stop-color="#101038"/><stop offset="0.25" stop-color="#204850"/><stop offset="0.5" stop-color="#18a0a0"/><stop offset="0.62" stop-color="#0a2a30"/><stop offset="1" stop-color="#000"/></linearGradient><radialGradient id="pmg" cx="0.5" cy="0.45" r="0.55"><stop offset="0" stop-color="#f09030"/><stop offset="0.7" stop-color="#b05010"/><stop offset="1" stop-color="#401000"/></radialGradient></defs>
<g transform="translate(41,697)"><rect x="2" y="2" width="29" height="29" fill="#444"/><rect x="0" y="0" width="29" height="29" fill="#000"/><rect x="1" y="1" width="27" height="27" fill="#a00000"/><rect x="2" y="2" width="25" height="25" fill="url(#eyeg)"/><path d="M2 4 Q14 1 27 6 V12 Q18 6 2 10 Z" fill="#666"/><path d="M2 16 Q12 10 20 12 Q25 14 26 18 Q20 24 10 21 Q5 19 2 16 Z" fill="#f4f4f4"/><path d="M2 16 Q10 10 18 11 Q24 13 26 17" fill="none" stroke="#111" stroke-width="1.5"/><circle cx="16" cy="16" r="5" fill="#111"/><circle cx="14" cy="14" r="1.3" fill="#eee"/></g>
<g transform="translate(112,696)"><rect x="2" y="2" width="31" height="31" fill="#333"/><rect x="0" y="0" width="31" height="31" fill="#e0a000"/><rect x="1" y="1" width="29" height="29" fill="#3a1a1a"/><path d="M1 1 H18 L8 14 H1 Z" fill="#6a2a3a"/><path d="M14 26 H30 V30 H10 Z" fill="#5a2a2a"/><path d="M2 17 L20 4 H30 V28 L24 30 Z" fill="#d8d8d8"/><path d="M2 17 L24 30 L23 32 L1 19 Z" fill="#888"/><path d="M15 22 L29 11" stroke="#444" stroke-width="1"/><path d="M20 4 H30 V12 Z" fill="#f0f0f0"/></g>
<g transform="translate(186,699)"><path d="M5.5 0.5 H21.5 L25.5 4.5 V17 L22 20.5 H5 L2.5 18 V4 Z" fill="#f8f8f8" stroke="#d09040" stroke-width="1"/><path d="M12 5 L15 2 L18 5 M18 3 H21 V10" fill="none" stroke="#888" stroke-width="1"/><path d="M2.5 9.5 H6 L7 8.5 H8.5 V15.5 H2.5 Z" fill="#d0d0ff" stroke="#000" stroke-width="1"/><path d="M11 5 L15 9.5 L11 14 L7.5 9.5 Z" fill="#fff" stroke="#000" stroke-width="1"/><path d="M12.5 8.5 H15.5 L17.5 10.5 V15.5 H12.5 Z" fill="#eee" stroke="#000" stroke-width="1"/><rect x="0" y="17" width="23" height="2.5" fill="#000"/><rect x="2" y="17.8" width="19" height="0.9" fill="#fff"/><rect x="10" y="19" width="4" height="4" fill="#000"/><path d="M1 26 H9 L11.5 23.5 L14 26 H22" fill="none" stroke="#000" stroke-width="2.2"/><path d="M2 26 H9 L11.5 23.5 L14 26 H21" fill="none" stroke="#fff" stroke-width="0.8"/></g>
<g transform="translate(256,696)"><circle cx="16" cy="16" r="15.5" fill="#5a9a5a"/><circle cx="16" cy="16" r="15" fill="none" stroke="#3a6a4a" stroke-width="1" stroke-dasharray="1 1"/><circle cx="16" cy="16" r="12" fill="url(#pmg)"/><path d="M5 16 Q8 12 11 13 L14 10 Q16 8 18 10 L21 12 Q25 11 28 15 L27 20 L25 18 L24 24 L21 24 L20 18 L17 22 L15 19 L12 24 L9 22 L10 18 L6 19 Z" fill="#fff"/><circle cx="12" cy="9.5" r="2.3" fill="#fff"/><circle cx="20" cy="9.5" r="2.3" fill="#fff"/><path d="M4 17 L9 26 M27 13 L26 24" stroke="#200" stroke-width="1.5"/></g>
<g transform="translate(328,696)"><rect x="2" y="2" width="31" height="31" fill="#333"/><rect x="0" y="0" width="31" height="31" fill="url(#nsg)"/><ellipse cx="8" cy="13" rx="4" ry="2.5" fill="#20b0e0"/><ellipse cx="23" cy="13" rx="4" ry="2.5" fill="#20b0e0"/><path d="M2 30 A13.5 13.5 0 0 1 29 30" fill="none" stroke="#e8e8e8" stroke-width="2.5"/><path d="M6 30 A9.5 9.5 0 0 1 25 30" fill="none" stroke="#999" stroke-width="2"/><path d="M15.5 17 V31 M4 19 L12 27 M27 19 L19 27 M15.5 10 V17" stroke="#e8e8e8" stroke-width="2"/><circle cx="3.5" cy="18.5" r="1.8" fill="#e8e8e8"/><circle cx="27.5" cy="18.5" r="1.8" fill="#e8e8e8"/><ellipse cx="15.5" cy="12" rx="2" ry="3.5" fill="#e8e8e8"/><rect x="17" y="9" width="2" height="7" fill="#000"/></g>
<path d="M1 736.5 H9.5 L18 745 V752 L10 760 H1 Z" fill="#d0d0d0" stroke="#000" stroke-width="1.4"/><rect x="0" y="736" width="2" height="25" fill="#000"/><g fill="#555"><rect x="5" y="740" width="1" height="1"/><rect x="8" y="742" width="1" height="1"/><rect x="5" y="744" width="1" height="1"/><rect x="8" y="746" width="1" height="1"/><rect x="5" y="748" width="1" height="1"/><rect x="8" y="750" width="1" height="1"/><rect x="5" y="752" width="1" height="1"/></g><rect x="11.5" y="741.5" width="3" height="9" fill="#fff" stroke="#000" stroke-width="1"/>
<path d="M845.5 625.5 V640 L849 636.5 L851.5 642.5 L854 641.5 L851.5 635.5 L856 635.5 Z" fill="#000" stroke="#fff" stroke-width="1"/>
<rect x="0" y="0" width="1024" height="19" fill="#fff"/>
<rect x="0" y="19" width="1024" height="1" fill="#000"/>
<path d="M0 0 H6 A6 6 0 0 0 0 6 Z" fill="#000"/><path d="M1024 0 H1018 A6 6 0 0 1 1024 6 Z" fill="#000"/>
<defs><clipPath id="appleclip"><path d="M23.5 5.5 C25.5 4.5 27.5 5 28.5 6.5 C26.8 7.6 26.5 10.8 29 12.2 C28.3 14.3 27 16.8 25.3 17 C24.2 17.1 23.8 16.4 22.6 16.4 C21.4 16.4 20.9 17.1 19.9 17 C18 16.8 16.5 13.5 16.5 11 C16.5 7.5 18.8 5.5 20.8 5.5 C22 5.5 22.6 6.1 23.5 5.5 Z M23.2 4.8 C23.2 3.3 24.3 2.2 25.6 2 C25.7 3.4 24.6 4.7 23.2 4.8 Z"/></clipPath></defs>
<g clip-path="url(#appleclip)"><rect x="16" y="1" width="14" height="5.5" fill="#3a3"/><rect x="16" y="6.5" width="14" height="2.2" fill="#fc0"/><rect x="16" y="8.7" width="14" height="2.2" fill="#f80"/><rect x="16" y="10.9" width="14" height="2.2" fill="#e22"/><rect x="16" y="13.1" width="14" height="2.2" fill="#a2a"/><rect x="16" y="15.3" width="14" height="3" fill="#22c"/></g>
<text x="42.7" y="14" font-family="Liberation Sans" font-size="12" font-weight="bold" fill="#000" textLength="20.6" lengthAdjust="spacingAndGlyphs">File</text>
<text x="77.3" y="14" font-family="Liberation Sans" font-size="12" font-weight="bold" fill="#000" textLength="23.5" lengthAdjust="spacingAndGlyphs">Edit</text>
<text x="114" y="14" font-family="Liberation Sans" font-size="12" font-weight="bold" fill="#000" textLength="26" lengthAdjust="spacingAndGlyphs">Text</text>
<text x="153.5" y="14" font-family="Liberation Sans" font-size="12" font-weight="bold" fill="#000" textLength="44.5" lengthAdjust="spacingAndGlyphs">Project</text>
<text x="211.7" y="14" font-family="Liberation Sans" font-size="12" font-weight="bold" fill="#000" textLength="46.2" lengthAdjust="spacingAndGlyphs">Browse</text>
<text x="272.6" y="14" font-family="Liberation Sans" font-size="12" font-weight="bold" fill="#000" textLength="38.7" lengthAdjust="spacingAndGlyphs">Debug</text>
<text x="324.9" y="14" font-family="Liberation Sans" font-size="12" font-weight="bold" fill="#000" textLength="57.2" lengthAdjust="spacingAndGlyphs">Windows</text>
<text x="396.4" y="14" font-family="Liberation Sans" font-size="12" font-weight="bold" fill="#000" textLength="26.7" lengthAdjust="spacingAndGlyphs">Help</text>
<text x="904" y="14" font-family="Liberation Sans" font-size="12" font-weight="bold" fill="#0000c0" textLength="46" lengthAdjust="spacingAndGlyphs">19:07:25</text>
<rect x="964" y="4" width="17" height="4" fill="#000"/>
<rect x="964" y="8" width="17" height="4" fill="#e00000"/>
<rect x="964" y="12" width="17" height="4" fill="#ffd000"/>
<rect x="964" y="16" width="17" height="1" fill="#bbb"/>
<circle cx="1001" cy="9.5" r="6.5" fill="#999" stroke="#555" stroke-width="1"/><rect x="997" y="6" width="4" height="4" fill="#e33"/><rect x="1001" y="6" width="4" height="4" fill="#3a3"/><rect x="997" y="10" width="4" height="4" fill="#33c"/><rect x="1001" y="10" width="4" height="4" fill="#e33"/>
<path d="M0 768 H6 A6 6 0 0 1 0 762 Z" fill="#000"/><path d="M1024 768 H1018 A6 6 0 0 0 1024 762 Z" fill="#000"/>
</svg></body></html>
